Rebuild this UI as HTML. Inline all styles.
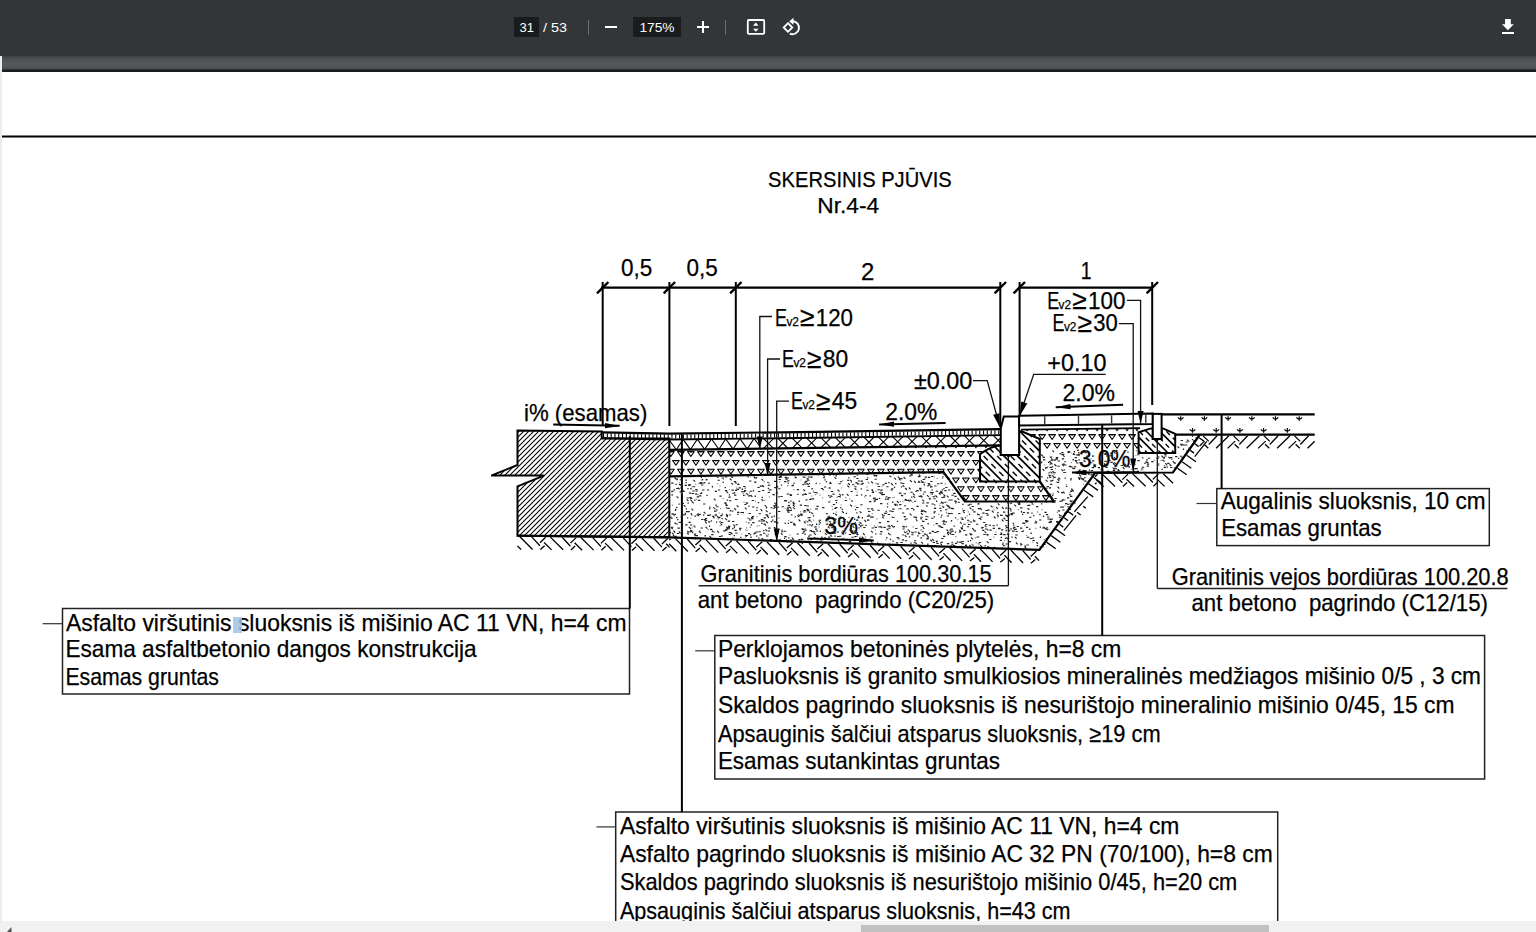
<!DOCTYPE html><html><head><meta charset="utf-8"><style>
html,body{margin:0;padding:0;width:1536px;height:932px;overflow:hidden;background:#f1f1f1;font-family:"Liberation Sans",sans-serif}
#tb{position:absolute;left:0;top:0;width:1536px;height:56px;background:#323639}
#band{position:absolute;left:2px;top:56px;width:1534px;height:16px;background:linear-gradient(#3b3f42 0px,#4a4e51 2.5px,#52565a 6px,#53575a 10px,#4b4f52 12.5px,#2e3032 13.6px,#1b1c1e 14.2px,#1b1c1e 15.6px,#8a8a8a 16px)}
#page{position:absolute;left:2px;top:72px;width:1534px;height:849px;background:#fff}
#sb{position:absolute;left:0;top:921px;width:1536px;height:11px;background:#f1f1f1}
#thumb{position:absolute;left:861px;top:925px;width:408px;height:7px;background:#c1c1c1}
svg{position:absolute;left:0;top:0}
</style></head><body>
<div id="tb"></div><div id="band"></div><div id="page"></div><div id="sb"></div><div id="thumb"></div>

<svg width="1536" height="932" viewBox="0 0 1536 932" font-family="Liberation Sans, sans-serif">
<defs>
<pattern id="h45" patternUnits="userSpaceOnUse" width="5" height="5"><path d="M-1,6 L6,-1 M-1,1 L1,-1 M4,6 L6,4" stroke="#000" stroke-width="1.1"/></pattern>
</defs>
<g font-size="13" fill="#fff">
<rect x="514" y="17" width="25" height="20" fill="#191b1c"/>
<text x="519.5" y="32" textLength="14.5" lengthAdjust="spacingAndGlyphs">31</text>
<text x="543" y="32" textLength="24" lengthAdjust="spacingAndGlyphs">/ 53</text>
<rect x="588" y="20" width="1" height="15" fill="#6b6e71"/>
<rect x="605" y="26" width="12" height="2" fill="#fff"/>
<rect x="633" y="17" width="48" height="20" fill="#191b1c"/>
<text x="639.5" y="32" textLength="35" lengthAdjust="spacingAndGlyphs">175%</text>
<rect x="697" y="26" width="12" height="2" fill="#fff"/><rect x="702" y="21" width="2" height="12" fill="#fff"/>
<rect x="725" y="20" width="1" height="15" fill="#6b6e71"/>
<rect x="747.8" y="20" width="16.4" height="13.8" rx="1" fill="none" stroke="#fff" stroke-width="1.8"/>
<polygon points="755.8,22.6 758.6,25.8 753,25.8" fill="#fff"/><polygon points="755.8,31.8 758.6,28.7 753,28.7" fill="#fff"/>
<polygon points="788,23.2 792.3,27.5 788,31.8 783.7,27.5" fill="none" stroke="#fff" stroke-width="1.8"/>
<path d="M792.5,21.2 A6.5,6.5 0 1 1 789.8,33.6" fill="none" stroke="#fff" stroke-width="1.9"/>
<polygon points="793.5,17.8 793.5,24.8 789.2,21.5" fill="#fff"/>
<polygon points="1505,19 1510.8,19 1510.8,24.3 1513.8,24.3 1507.9,30.2 1502,24.3 1505,24.3" fill="#fff"/>
<rect x="1502" y="32" width="12" height="2" fill="#fff"/>
</g>
<polygon points="11.5,927 11.5,932 7,932" fill="#505050"/>
<rect x="0" y="56" width="2" height="866" fill="#ececec"/>
<rect x="2" y="135.5" width="1534" height="2" fill="#000"/>
<clipPath id="pg"><rect x="2" y="72" width="1534" height="849"/></clipPath>
<g clip-path="url(#pg)">
<g fill="#000" stroke="#000" stroke-width="0.25">
<text x="768.1" y="186.7" font-size="22.4" textLength="183.6" lengthAdjust="spacingAndGlyphs" fill="#000" >SKERSINIS PJŪVIS</text>
<text x="817.3" y="212.7" font-size="22.4" textLength="61.8" lengthAdjust="spacingAndGlyphs" fill="#000" >Nr.4-4</text>
<text x="621.0" y="275.8" font-size="23.4" textLength="31.3" lengthAdjust="spacingAndGlyphs" fill="#000" >0,5</text>
<text x="686.6" y="275.8" font-size="23.4" textLength="31.3" lengthAdjust="spacingAndGlyphs" fill="#000" >0,5</text>
<text x="861.1" y="279.7" font-size="23.4" textLength="13.3" lengthAdjust="spacingAndGlyphs" fill="#000" >2</text>
<text x="1080.7" y="279.3" font-size="23.4" textLength="10.8" lengthAdjust="spacingAndGlyphs" fill="#000" >1</text>
<text x="775.0" y="325.6" font-size="23" textLength="12" lengthAdjust="spacingAndGlyphs">E</text>
<text x="786.4" y="325.6" font-size="13.5" textLength="12.6" lengthAdjust="spacingAndGlyphs">v2</text>
<text x="800.1" y="326.2" font-size="27" textLength="14.5" lengthAdjust="spacingAndGlyphs">≥</text>
<text x="815.8" y="325.6" font-size="23" textLength="37.2" lengthAdjust="spacingAndGlyphs">120</text>
<text x="782.0" y="367.4" font-size="23" textLength="12" lengthAdjust="spacingAndGlyphs">E</text>
<text x="793.4" y="367.4" font-size="13.5" textLength="12.6" lengthAdjust="spacingAndGlyphs">v2</text>
<text x="807.1" y="368.0" font-size="27" textLength="14.5" lengthAdjust="spacingAndGlyphs">≥</text>
<text x="822.8" y="367.4" font-size="23" textLength="25.4" lengthAdjust="spacingAndGlyphs">80</text>
<text x="791.0" y="409.2" font-size="23" textLength="12" lengthAdjust="spacingAndGlyphs">E</text>
<text x="802.4" y="409.2" font-size="13.5" textLength="12.6" lengthAdjust="spacingAndGlyphs">v2</text>
<text x="816.1" y="409.8" font-size="27" textLength="14.5" lengthAdjust="spacingAndGlyphs">≥</text>
<text x="831.8" y="409.2" font-size="23" textLength="25.4" lengthAdjust="spacingAndGlyphs">45</text>
<text x="1047.2" y="308.6" font-size="23" textLength="12" lengthAdjust="spacingAndGlyphs">E</text>
<text x="1058.6" y="308.6" font-size="13.5" textLength="12.6" lengthAdjust="spacingAndGlyphs">v2</text>
<text x="1072.3" y="309.2" font-size="27" textLength="14.5" lengthAdjust="spacingAndGlyphs">≥</text>
<text x="1088.0" y="308.6" font-size="23" textLength="37.4" lengthAdjust="spacingAndGlyphs">100</text>
<text x="1052.5" y="331.4" font-size="23" textLength="12" lengthAdjust="spacingAndGlyphs">E</text>
<text x="1063.9" y="331.4" font-size="13.5" textLength="12.6" lengthAdjust="spacingAndGlyphs">v2</text>
<text x="1077.6" y="332.0" font-size="27" textLength="14.5" lengthAdjust="spacingAndGlyphs">≥</text>
<text x="1093.3" y="331.4" font-size="23" textLength="24.5" lengthAdjust="spacingAndGlyphs">30</text>
<text x="524.0" y="420.5" font-size="23.4" textLength="123.3" lengthAdjust="spacingAndGlyphs" fill="#000" >i% (esamas)</text>
<text x="885.3" y="419.7" font-size="23.4" textLength="52.0" lengthAdjust="spacingAndGlyphs" fill="#000" >2.0%</text>
<text x="913.9" y="389.1" font-size="23.4" textLength="58.5" lengthAdjust="spacingAndGlyphs" fill="#000" >±0.00</text>
<text x="1047.3" y="371.0" font-size="23.4" textLength="59.1" lengthAdjust="spacingAndGlyphs" fill="#000" >+0.10</text>
<text x="1062.5" y="401.3" font-size="23.4" textLength="52.4" lengthAdjust="spacingAndGlyphs" fill="#000" >2.0%</text>
<text x="824.2" y="534.0" font-size="23.4" textLength="33.7" lengthAdjust="spacingAndGlyphs" fill="#000" >3%</text>
<text x="1078.9" y="467.3" font-size="23.4" textLength="51.6" lengthAdjust="spacingAndGlyphs" fill="#000" >3.0%</text>
<text x="700.5" y="581.9" font-size="23.4" textLength="291.1" lengthAdjust="spacingAndGlyphs" fill="#000" >Granitinis bordiūras 100.30.15</text>
<text x="697.7" y="607.6" font-size="23.4" textLength="296.5" lengthAdjust="spacingAndGlyphs" fill="#000" >ant betono&#160; pagrindo (C20/25)</text>
<text x="1171.7" y="584.7" font-size="23.4" textLength="337.0" lengthAdjust="spacingAndGlyphs" fill="#000" >Granitinis vejos bordiūras 100.20.8</text>
<text x="1191.5" y="610.5" font-size="23.4" textLength="296.5" lengthAdjust="spacingAndGlyphs" fill="#000" >ant betono&#160; pagrindo (C12/15)</text>
<text x="1220.7" y="509.2" font-size="23.4" textLength="264.8" lengthAdjust="spacingAndGlyphs" fill="#000" >Augalinis sluoksnis, 10 cm</text>
<text x="1221.2" y="535.7" font-size="23.4" textLength="160.4" lengthAdjust="spacingAndGlyphs" fill="#000" >Esamas gruntas</text>
<text x="66.0" y="630.6" font-size="23.4" textLength="560.5" lengthAdjust="spacingAndGlyphs" fill="#000" >Asfalto viršutinis sluoksnis iš mišinio AC 11 VN, h=4 cm</text>
<text x="65.4" y="657.3" font-size="23.4" textLength="411.3" lengthAdjust="spacingAndGlyphs" fill="#000" >Esama asfaltbetonio dangos konstrukcija</text>
<text x="65.4" y="684.6" font-size="23.4" textLength="153.6" lengthAdjust="spacingAndGlyphs" fill="#000" >Esamas gruntas</text>
<text x="717.9" y="656.8" font-size="23.4" textLength="403.4" lengthAdjust="spacingAndGlyphs" fill="#000" >Perklojamos betoninės plytelės, h=8 cm</text>
<text x="717.9" y="684.2" font-size="23.4" textLength="763.1" lengthAdjust="spacingAndGlyphs" fill="#000" >Pasluoksnis iš granito smulkiosios mineralinės medžiagos mišinio 0/5 , 3 cm</text>
<text x="717.9" y="713.0" font-size="23.4" textLength="736.7" lengthAdjust="spacingAndGlyphs" fill="#000" >Skaldos pagrindo sluoksnis iš nesurištojo mineralinio mišinio 0/45, 15 cm</text>
<text x="717.9" y="741.7" font-size="23.4" textLength="442.8" lengthAdjust="spacingAndGlyphs" fill="#000" >Apsauginis šalčiui atsparus sluoksnis, ≥19 cm</text>
<text x="717.9" y="768.9" font-size="23.4" textLength="282.1" lengthAdjust="spacingAndGlyphs" fill="#000" >Esamas sutankintas gruntas</text>
<text x="619.9" y="834.0" font-size="23.4" textLength="559.5" lengthAdjust="spacingAndGlyphs" fill="#000" >Asfalto viršutinis sluoksnis iš mišinio AC 11 VN, h=4 cm</text>
<text x="619.9" y="862.0" font-size="23.4" textLength="652.9" lengthAdjust="spacingAndGlyphs" fill="#000" >Asfalto pagrindo sluoksnis iš mišinio AC 32 PN (70/100), h=8 cm</text>
<text x="619.9" y="890.4" font-size="23.4" textLength="617.4" lengthAdjust="spacingAndGlyphs" fill="#000" >Skaldos pagrindo sluoksnis iš nesurištojo mišinio 0/45, h=20 cm</text>
<text x="619.9" y="918.7" font-size="23.4" textLength="450.7" lengthAdjust="spacingAndGlyphs" fill="#000" >Apsauginis šalčiui atsparus sluoksnis, h=43 cm</text>
</g>
<rect x="233" y="617" width="9" height="16" fill="#9fc3e3" opacity="0.85"/>
<g fill="none" stroke="#222" stroke-width="1.5">
<rect x="62.5" y="608.5" width="567" height="85.5"/>
<rect x="714.8" y="635.5" width="769.8" height="143.5"/>
<rect x="615.7" y="812" width="662" height="130"/>
<rect x="1216.8" y="488.6" width="272.5" height="57"/>
</g>
<line x1="42.60" y1="623.70" x2="62.50" y2="623.70" stroke="#333" stroke-width="1.2" />
<line x1="695.20" y1="650.80" x2="714.80" y2="650.80" stroke="#333" stroke-width="1.2" />
<line x1="596.40" y1="826.90" x2="615.70" y2="826.90" stroke="#333" stroke-width="1.2" />
<line x1="1196.50" y1="503.50" x2="1216.80" y2="503.50" stroke="#333" stroke-width="1.2" />
<line x1="698.60" y1="585.70" x2="1008.40" y2="585.70" stroke="#222" stroke-width="1.5" />
<line x1="1157.50" y1="588.60" x2="1507.40" y2="588.60" stroke="#222" stroke-width="1.5" />
<line x1="629.80" y1="436.00" x2="629.80" y2="608.50" stroke="#000" stroke-width="2" />
<line x1="681.90" y1="433.00" x2="681.90" y2="812.00" stroke="#000" stroke-width="2" />
<line x1="1102.20" y1="414.50" x2="1102.20" y2="635.50" stroke="#000" stroke-width="2" />
<line x1="1221.60" y1="414.40" x2="1221.60" y2="488.60" stroke="#000" stroke-width="2" />
<line x1="1008.40" y1="455.00" x2="1008.40" y2="585.70" stroke="#111" stroke-width="1.3" />
<line x1="1157.30" y1="439.00" x2="1157.30" y2="588.60" stroke="#111" stroke-width="1.3" />
<circle cx="1008.4" cy="455.5" r="1.8" fill="#000"/>
<circle cx="1157.3" cy="439" r="1.8" fill="#000"/>
<line x1="601.00" y1="287.70" x2="1001.00" y2="287.70" stroke="#000" stroke-width="2.2" />
<line x1="1019.30" y1="287.70" x2="1153.00" y2="287.70" stroke="#000" stroke-width="2.2" />
<line x1="597.00" y1="293.40" x2="608.40" y2="282.00" stroke="#000" stroke-width="2.4" />
<line x1="663.70" y1="293.40" x2="675.10" y2="282.00" stroke="#000" stroke-width="2.4" />
<line x1="730.10" y1="293.40" x2="741.50" y2="282.00" stroke="#000" stroke-width="2.4" />
<line x1="994.60" y1="293.40" x2="1006.00" y2="282.00" stroke="#000" stroke-width="2.4" />
<line x1="1013.60" y1="293.40" x2="1025.00" y2="282.00" stroke="#000" stroke-width="2.4" />
<line x1="1146.60" y1="293.40" x2="1158.00" y2="282.00" stroke="#000" stroke-width="2.4" />
<line x1="602.70" y1="282.00" x2="602.70" y2="426.00" stroke="#000" stroke-width="2" />
<line x1="669.40" y1="282.00" x2="669.40" y2="426.00" stroke="#000" stroke-width="2" />
<line x1="735.80" y1="282.00" x2="735.80" y2="426.00" stroke="#000" stroke-width="2" />
<line x1="1000.30" y1="282.00" x2="1000.30" y2="427.00" stroke="#000" stroke-width="2" />
<line x1="1019.60" y1="282.00" x2="1019.60" y2="415.00" stroke="#000" stroke-width="2" />
<line x1="1152.20" y1="282.00" x2="1152.20" y2="405.00" stroke="#000" stroke-width="2" />
<polygon points="517.50,430.60 601.70,431.60 601.70,438.30 669.30,438.40 669.30,537.30 517.50,535.70 517.50,486.40 543.90,475.60 491.25,475.60 517.50,465.00" fill="url(#h45)" stroke="#000" stroke-width="2" stroke-linejoin="miter"/>
<g>
<polyline points="601.70,432.30 669.30,433.60 800.00,432.10 1000.80,429.20" fill="none" stroke="#000" stroke-width="2.2" />
<polyline points="601.70,438.20 669.30,439.50 800.00,438.00 1000.80,435.10" fill="none" stroke="#000" stroke-width="1.9" />
<rect x="603.00" y="433.32" width="1.1" height="4" fill="#000"/>
<rect x="606.80" y="433.40" width="1.1" height="4" fill="#000"/>
<rect x="610.60" y="433.47" width="1.1" height="4" fill="#000"/>
<rect x="614.40" y="433.54" width="1.1" height="4" fill="#000"/>
<rect x="618.20" y="433.62" width="1.1" height="4" fill="#000"/>
<rect x="622.00" y="433.69" width="1.1" height="4" fill="#000"/>
<rect x="625.80" y="433.76" width="1.1" height="4" fill="#000"/>
<rect x="629.60" y="433.84" width="1.1" height="4" fill="#000"/>
<rect x="633.40" y="433.91" width="1.1" height="4" fill="#000"/>
<rect x="637.20" y="433.98" width="1.1" height="4" fill="#000"/>
<rect x="641.00" y="434.06" width="1.1" height="4" fill="#000"/>
<rect x="644.80" y="434.13" width="1.1" height="4" fill="#000"/>
<rect x="648.60" y="434.20" width="1.1" height="4" fill="#000"/>
<rect x="652.40" y="434.28" width="1.1" height="4" fill="#000"/>
<rect x="656.20" y="434.35" width="1.1" height="4" fill="#000"/>
<rect x="660.00" y="434.42" width="1.1" height="4" fill="#000"/>
<rect x="663.80" y="434.49" width="1.1" height="4" fill="#000"/>
<rect x="667.60" y="434.57" width="1.1" height="4" fill="#000"/>
<rect x="671.40" y="434.58" width="1.1" height="4" fill="#000"/>
<rect x="675.20" y="434.53" width="1.1" height="4" fill="#000"/>
<rect x="679.00" y="434.49" width="1.1" height="4" fill="#000"/>
<rect x="682.80" y="434.45" width="1.1" height="4" fill="#000"/>
<rect x="686.60" y="434.40" width="1.1" height="4" fill="#000"/>
<rect x="690.40" y="434.36" width="1.1" height="4" fill="#000"/>
<rect x="694.20" y="434.31" width="1.1" height="4" fill="#000"/>
<rect x="698.00" y="434.27" width="1.1" height="4" fill="#000"/>
<rect x="701.80" y="434.23" width="1.1" height="4" fill="#000"/>
<rect x="705.60" y="434.18" width="1.1" height="4" fill="#000"/>
<rect x="709.40" y="434.14" width="1.1" height="4" fill="#000"/>
<rect x="713.20" y="434.10" width="1.1" height="4" fill="#000"/>
<rect x="717.00" y="434.05" width="1.1" height="4" fill="#000"/>
<rect x="720.80" y="434.01" width="1.1" height="4" fill="#000"/>
<rect x="724.60" y="433.97" width="1.1" height="4" fill="#000"/>
<rect x="728.40" y="433.92" width="1.1" height="4" fill="#000"/>
<rect x="732.20" y="433.88" width="1.1" height="4" fill="#000"/>
<rect x="736.00" y="433.83" width="1.1" height="4" fill="#000"/>
<rect x="739.80" y="433.79" width="1.1" height="4" fill="#000"/>
<rect x="743.60" y="433.75" width="1.1" height="4" fill="#000"/>
<rect x="747.40" y="433.70" width="1.1" height="4" fill="#000"/>
<rect x="751.20" y="433.66" width="1.1" height="4" fill="#000"/>
<rect x="755.00" y="433.62" width="1.1" height="4" fill="#000"/>
<rect x="758.80" y="433.57" width="1.1" height="4" fill="#000"/>
<rect x="762.60" y="433.53" width="1.1" height="4" fill="#000"/>
<rect x="766.40" y="433.49" width="1.1" height="4" fill="#000"/>
<rect x="770.20" y="433.44" width="1.1" height="4" fill="#000"/>
<rect x="774.00" y="433.40" width="1.1" height="4" fill="#000"/>
<rect x="777.80" y="433.35" width="1.1" height="4" fill="#000"/>
<rect x="781.60" y="433.31" width="1.1" height="4" fill="#000"/>
<rect x="785.40" y="433.27" width="1.1" height="4" fill="#000"/>
<rect x="789.20" y="433.22" width="1.1" height="4" fill="#000"/>
<rect x="793.00" y="433.18" width="1.1" height="4" fill="#000"/>
<rect x="796.80" y="433.14" width="1.1" height="4" fill="#000"/>
<rect x="800.60" y="433.09" width="1.1" height="4" fill="#000"/>
<rect x="804.40" y="433.04" width="1.1" height="4" fill="#000"/>
<rect x="808.20" y="432.98" width="1.1" height="4" fill="#000"/>
<rect x="812.00" y="432.93" width="1.1" height="4" fill="#000"/>
<rect x="815.80" y="432.87" width="1.1" height="4" fill="#000"/>
<rect x="819.60" y="432.82" width="1.1" height="4" fill="#000"/>
<rect x="823.40" y="432.76" width="1.1" height="4" fill="#000"/>
<rect x="827.20" y="432.71" width="1.1" height="4" fill="#000"/>
<rect x="831.00" y="432.65" width="1.1" height="4" fill="#000"/>
<rect x="834.80" y="432.60" width="1.1" height="4" fill="#000"/>
<rect x="838.60" y="432.54" width="1.1" height="4" fill="#000"/>
<rect x="842.40" y="432.49" width="1.1" height="4" fill="#000"/>
<rect x="846.20" y="432.43" width="1.1" height="4" fill="#000"/>
<rect x="850.00" y="432.38" width="1.1" height="4" fill="#000"/>
<rect x="853.80" y="432.32" width="1.1" height="4" fill="#000"/>
<rect x="857.60" y="432.27" width="1.1" height="4" fill="#000"/>
<rect x="861.40" y="432.21" width="1.1" height="4" fill="#000"/>
<rect x="865.20" y="432.16" width="1.1" height="4" fill="#000"/>
<rect x="869.00" y="432.10" width="1.1" height="4" fill="#000"/>
<rect x="872.80" y="432.05" width="1.1" height="4" fill="#000"/>
<rect x="876.60" y="431.99" width="1.1" height="4" fill="#000"/>
<rect x="880.40" y="431.94" width="1.1" height="4" fill="#000"/>
<rect x="884.20" y="431.88" width="1.1" height="4" fill="#000"/>
<rect x="888.00" y="431.83" width="1.1" height="4" fill="#000"/>
<rect x="891.80" y="431.77" width="1.1" height="4" fill="#000"/>
<rect x="895.60" y="431.72" width="1.1" height="4" fill="#000"/>
<rect x="899.40" y="431.66" width="1.1" height="4" fill="#000"/>
<rect x="903.20" y="431.61" width="1.1" height="4" fill="#000"/>
<rect x="907.00" y="431.55" width="1.1" height="4" fill="#000"/>
<rect x="910.80" y="431.50" width="1.1" height="4" fill="#000"/>
<rect x="914.60" y="431.44" width="1.1" height="4" fill="#000"/>
<rect x="918.40" y="431.39" width="1.1" height="4" fill="#000"/>
<rect x="922.20" y="431.34" width="1.1" height="4" fill="#000"/>
<rect x="926.00" y="431.28" width="1.1" height="4" fill="#000"/>
<rect x="929.80" y="431.23" width="1.1" height="4" fill="#000"/>
<rect x="933.60" y="431.17" width="1.1" height="4" fill="#000"/>
<rect x="937.40" y="431.12" width="1.1" height="4" fill="#000"/>
<rect x="941.20" y="431.06" width="1.1" height="4" fill="#000"/>
<rect x="945.00" y="431.01" width="1.1" height="4" fill="#000"/>
<rect x="948.80" y="430.95" width="1.1" height="4" fill="#000"/>
<rect x="952.60" y="430.90" width="1.1" height="4" fill="#000"/>
<rect x="956.40" y="430.84" width="1.1" height="4" fill="#000"/>
<rect x="960.20" y="430.79" width="1.1" height="4" fill="#000"/>
<rect x="964.00" y="430.73" width="1.1" height="4" fill="#000"/>
<rect x="967.80" y="430.68" width="1.1" height="4" fill="#000"/>
<rect x="971.60" y="430.62" width="1.1" height="4" fill="#000"/>
<rect x="975.40" y="430.57" width="1.1" height="4" fill="#000"/>
<rect x="979.20" y="430.51" width="1.1" height="4" fill="#000"/>
<rect x="983.00" y="430.46" width="1.1" height="4" fill="#000"/>
<rect x="986.80" y="430.40" width="1.1" height="4" fill="#000"/>
<rect x="990.60" y="430.35" width="1.1" height="4" fill="#000"/>
<rect x="994.40" y="430.29" width="1.1" height="4" fill="#000"/>
<rect x="998.20" y="430.24" width="1.1" height="4" fill="#000"/>
</g>
<clipPath id="cx"><polygon points="759.8,438.5 1000.8,435.1 1000.8,445.4 759.8,448.8"/></clipPath>
<g clip-path="url(#cx)" stroke="#000" stroke-width="1.1">
<line x1="749.05" y1="438.53" x2="759.35" y2="448.83"/>
<line x1="749.05" y1="448.83" x2="759.35" y2="438.53"/>
<line x1="763.40" y1="438.36" x2="773.70" y2="448.66"/>
<line x1="763.40" y1="448.66" x2="773.70" y2="438.36"/>
<line x1="777.75" y1="438.20" x2="788.05" y2="448.50"/>
<line x1="777.75" y1="448.50" x2="788.05" y2="438.20"/>
<line x1="792.10" y1="438.03" x2="802.40" y2="448.33"/>
<line x1="792.10" y1="448.33" x2="802.40" y2="438.03"/>
<line x1="806.45" y1="437.83" x2="816.75" y2="448.13"/>
<line x1="806.45" y1="448.13" x2="816.75" y2="437.83"/>
<line x1="820.80" y1="437.63" x2="831.10" y2="447.93"/>
<line x1="820.80" y1="447.93" x2="831.10" y2="437.63"/>
<line x1="835.15" y1="437.42" x2="845.45" y2="447.72"/>
<line x1="835.15" y1="447.72" x2="845.45" y2="437.42"/>
<line x1="849.50" y1="437.21" x2="859.80" y2="447.51"/>
<line x1="849.50" y1="447.51" x2="859.80" y2="437.21"/>
<line x1="863.85" y1="437.00" x2="874.15" y2="447.30"/>
<line x1="863.85" y1="447.30" x2="874.15" y2="437.00"/>
<line x1="878.20" y1="436.80" x2="888.50" y2="447.10"/>
<line x1="878.20" y1="447.10" x2="888.50" y2="436.80"/>
<line x1="892.55" y1="436.59" x2="902.85" y2="446.89"/>
<line x1="892.55" y1="446.89" x2="902.85" y2="436.59"/>
<line x1="906.90" y1="436.38" x2="917.20" y2="446.68"/>
<line x1="906.90" y1="446.68" x2="917.20" y2="436.38"/>
<line x1="921.25" y1="436.17" x2="931.55" y2="446.47"/>
<line x1="921.25" y1="446.47" x2="931.55" y2="436.17"/>
<line x1="935.60" y1="435.97" x2="945.90" y2="446.27"/>
<line x1="935.60" y1="446.27" x2="945.90" y2="435.97"/>
<line x1="949.95" y1="435.76" x2="960.25" y2="446.06"/>
<line x1="949.95" y1="446.06" x2="960.25" y2="435.76"/>
<line x1="964.30" y1="435.55" x2="974.60" y2="445.85"/>
<line x1="964.30" y1="445.85" x2="974.60" y2="435.55"/>
<line x1="978.65" y1="435.35" x2="988.95" y2="445.65"/>
<line x1="978.65" y1="445.65" x2="988.95" y2="435.35"/>
<line x1="993.00" y1="435.14" x2="1003.30" y2="445.44"/>
<line x1="993.00" y1="445.44" x2="1003.30" y2="435.14"/>
</g>
<clipPath id="cx2"><rect x="669.3" y="420" width="90.5" height="40"/></clipPath>
<g clip-path="url(#cx2)" stroke="#000" stroke-width="1.1" fill="none">
<path d="M662.10,449.66L668.90,439.49L676.30,449.72M676.30,449.72L683.10,439.34L690.50,449.56M690.50,449.56L697.30,439.18L704.70,449.39M704.70,449.39L711.50,439.02L718.90,449.23M718.90,449.23L725.70,438.85L733.10,449.07M733.10,449.07L739.90,438.69L747.30,448.90M747.30,448.90L754.10,438.53L761.50,448.74M761.50,448.74L768.30,438.36L775.70,448.58"/>
</g>
<polyline points="669.30,449.80 1000.80,445.40" fill="none" stroke="#000" stroke-width="2.2" />
<defs><g id="tri"><path d="M-3.3,-2.3 L3.3,-2.3 L0,2.6 Z" fill="none" stroke="#000" stroke-width="1.05" stroke-linejoin="round"/><path d="M0,-2.3 L0,-0.9" stroke="#222" stroke-width="0.9"/></g></defs>
<clipPath id="ctr"><polygon points="669.3,449.8 1000.8,445.4 1000.8,445.2 980.0,454.3 980.0,481.5 1039.8,481.5 1053.9,501.5 964.8,501.5 943.5,472.2 669.3,476.3"/></clipPath>
<clipPath id="cts"><polygon points="1021.5,429.6 1138.6,428.2 1138.6,449.6 1039.6,449.6 1039.8,439.0 1021.5,431.3"/></clipPath>
<g clip-path="url(#ctr)">
<use href="#tri" x="655.9" y="427.5"/>
<use href="#tri" x="665.9" y="427.5"/>
<use href="#tri" x="675.9" y="427.5"/>
<use href="#tri" x="685.9" y="427.5"/>
<use href="#tri" x="695.9" y="427.5"/>
<use href="#tri" x="705.9" y="427.5"/>
<use href="#tri" x="715.9" y="427.5"/>
<use href="#tri" x="725.9" y="427.5"/>
<use href="#tri" x="735.9" y="427.5"/>
<use href="#tri" x="745.9" y="427.5"/>
<use href="#tri" x="755.9" y="427.5"/>
<use href="#tri" x="765.9" y="427.5"/>
<use href="#tri" x="775.9" y="427.5"/>
<use href="#tri" x="785.9" y="427.5"/>
<use href="#tri" x="795.9" y="427.5"/>
<use href="#tri" x="805.9" y="427.5"/>
<use href="#tri" x="815.9" y="427.5"/>
<use href="#tri" x="825.9" y="427.5"/>
<use href="#tri" x="835.9" y="427.5"/>
<use href="#tri" x="845.9" y="427.5"/>
<use href="#tri" x="855.9" y="427.5"/>
<use href="#tri" x="865.9" y="427.5"/>
<use href="#tri" x="875.9" y="427.5"/>
<use href="#tri" x="885.9" y="427.5"/>
<use href="#tri" x="895.9" y="427.5"/>
<use href="#tri" x="905.9" y="427.5"/>
<use href="#tri" x="915.9" y="427.5"/>
<use href="#tri" x="925.9" y="427.5"/>
<use href="#tri" x="935.9" y="427.5"/>
<use href="#tri" x="945.9" y="427.5"/>
<use href="#tri" x="955.9" y="427.5"/>
<use href="#tri" x="965.9" y="427.5"/>
<use href="#tri" x="975.9" y="427.5"/>
<use href="#tri" x="985.9" y="427.5"/>
<use href="#tri" x="995.9" y="427.5"/>
<use href="#tri" x="1005.9" y="427.5"/>
<use href="#tri" x="1015.9" y="427.5"/>
<use href="#tri" x="1025.9" y="427.5"/>
<use href="#tri" x="1035.9" y="427.5"/>
<use href="#tri" x="1045.9" y="427.5"/>
<use href="#tri" x="1055.9" y="427.5"/>
<use href="#tri" x="1065.9" y="427.5"/>
<use href="#tri" x="650.9" y="436.3"/>
<use href="#tri" x="660.9" y="436.3"/>
<use href="#tri" x="670.9" y="436.3"/>
<use href="#tri" x="680.9" y="436.3"/>
<use href="#tri" x="690.9" y="436.3"/>
<use href="#tri" x="700.9" y="436.3"/>
<use href="#tri" x="710.9" y="436.3"/>
<use href="#tri" x="720.9" y="436.3"/>
<use href="#tri" x="730.9" y="436.3"/>
<use href="#tri" x="740.9" y="436.3"/>
<use href="#tri" x="750.9" y="436.3"/>
<use href="#tri" x="760.9" y="436.3"/>
<use href="#tri" x="770.9" y="436.3"/>
<use href="#tri" x="780.9" y="436.3"/>
<use href="#tri" x="790.9" y="436.3"/>
<use href="#tri" x="800.9" y="436.3"/>
<use href="#tri" x="810.9" y="436.3"/>
<use href="#tri" x="820.9" y="436.3"/>
<use href="#tri" x="830.9" y="436.3"/>
<use href="#tri" x="840.9" y="436.3"/>
<use href="#tri" x="850.9" y="436.3"/>
<use href="#tri" x="860.9" y="436.3"/>
<use href="#tri" x="870.9" y="436.3"/>
<use href="#tri" x="880.9" y="436.3"/>
<use href="#tri" x="890.9" y="436.3"/>
<use href="#tri" x="900.9" y="436.3"/>
<use href="#tri" x="910.9" y="436.3"/>
<use href="#tri" x="920.9" y="436.3"/>
<use href="#tri" x="930.9" y="436.3"/>
<use href="#tri" x="940.9" y="436.3"/>
<use href="#tri" x="950.9" y="436.3"/>
<use href="#tri" x="960.9" y="436.3"/>
<use href="#tri" x="970.9" y="436.3"/>
<use href="#tri" x="980.9" y="436.3"/>
<use href="#tri" x="990.9" y="436.3"/>
<use href="#tri" x="1000.9" y="436.3"/>
<use href="#tri" x="1010.9" y="436.3"/>
<use href="#tri" x="1020.9" y="436.3"/>
<use href="#tri" x="1030.9" y="436.3"/>
<use href="#tri" x="1040.9" y="436.3"/>
<use href="#tri" x="1050.9" y="436.3"/>
<use href="#tri" x="1060.9" y="436.3"/>
<use href="#tri" x="655.9" y="445.1"/>
<use href="#tri" x="665.9" y="445.1"/>
<use href="#tri" x="675.9" y="445.1"/>
<use href="#tri" x="685.9" y="445.1"/>
<use href="#tri" x="695.9" y="445.1"/>
<use href="#tri" x="705.9" y="445.1"/>
<use href="#tri" x="715.9" y="445.1"/>
<use href="#tri" x="725.9" y="445.1"/>
<use href="#tri" x="735.9" y="445.1"/>
<use href="#tri" x="745.9" y="445.1"/>
<use href="#tri" x="755.9" y="445.1"/>
<use href="#tri" x="765.9" y="445.1"/>
<use href="#tri" x="775.9" y="445.1"/>
<use href="#tri" x="785.9" y="445.1"/>
<use href="#tri" x="795.9" y="445.1"/>
<use href="#tri" x="805.9" y="445.1"/>
<use href="#tri" x="815.9" y="445.1"/>
<use href="#tri" x="825.9" y="445.1"/>
<use href="#tri" x="835.9" y="445.1"/>
<use href="#tri" x="845.9" y="445.1"/>
<use href="#tri" x="855.9" y="445.1"/>
<use href="#tri" x="865.9" y="445.1"/>
<use href="#tri" x="875.9" y="445.1"/>
<use href="#tri" x="885.9" y="445.1"/>
<use href="#tri" x="895.9" y="445.1"/>
<use href="#tri" x="905.9" y="445.1"/>
<use href="#tri" x="915.9" y="445.1"/>
<use href="#tri" x="925.9" y="445.1"/>
<use href="#tri" x="935.9" y="445.1"/>
<use href="#tri" x="945.9" y="445.1"/>
<use href="#tri" x="955.9" y="445.1"/>
<use href="#tri" x="965.9" y="445.1"/>
<use href="#tri" x="975.9" y="445.1"/>
<use href="#tri" x="985.9" y="445.1"/>
<use href="#tri" x="995.9" y="445.1"/>
<use href="#tri" x="1005.9" y="445.1"/>
<use href="#tri" x="1015.9" y="445.1"/>
<use href="#tri" x="1025.9" y="445.1"/>
<use href="#tri" x="1035.9" y="445.1"/>
<use href="#tri" x="1045.9" y="445.1"/>
<use href="#tri" x="1055.9" y="445.1"/>
<use href="#tri" x="1065.9" y="445.1"/>
<use href="#tri" x="650.9" y="453.9"/>
<use href="#tri" x="660.9" y="453.9"/>
<use href="#tri" x="670.9" y="453.9"/>
<use href="#tri" x="680.9" y="453.9"/>
<use href="#tri" x="690.9" y="453.9"/>
<use href="#tri" x="700.9" y="453.9"/>
<use href="#tri" x="710.9" y="453.9"/>
<use href="#tri" x="720.9" y="453.9"/>
<use href="#tri" x="730.9" y="453.9"/>
<use href="#tri" x="740.9" y="453.9"/>
<use href="#tri" x="750.9" y="453.9"/>
<use href="#tri" x="760.9" y="453.9"/>
<use href="#tri" x="770.9" y="453.9"/>
<use href="#tri" x="780.9" y="453.9"/>
<use href="#tri" x="790.9" y="453.9"/>
<use href="#tri" x="800.9" y="453.9"/>
<use href="#tri" x="810.9" y="453.9"/>
<use href="#tri" x="820.9" y="453.9"/>
<use href="#tri" x="830.9" y="453.9"/>
<use href="#tri" x="840.9" y="453.9"/>
<use href="#tri" x="850.9" y="453.9"/>
<use href="#tri" x="860.9" y="453.9"/>
<use href="#tri" x="870.9" y="453.9"/>
<use href="#tri" x="880.9" y="453.9"/>
<use href="#tri" x="890.9" y="453.9"/>
<use href="#tri" x="900.9" y="453.9"/>
<use href="#tri" x="910.9" y="453.9"/>
<use href="#tri" x="920.9" y="453.9"/>
<use href="#tri" x="930.9" y="453.9"/>
<use href="#tri" x="940.9" y="453.9"/>
<use href="#tri" x="950.9" y="453.9"/>
<use href="#tri" x="960.9" y="453.9"/>
<use href="#tri" x="970.9" y="453.9"/>
<use href="#tri" x="980.9" y="453.9"/>
<use href="#tri" x="990.9" y="453.9"/>
<use href="#tri" x="1000.9" y="453.9"/>
<use href="#tri" x="1010.9" y="453.9"/>
<use href="#tri" x="1020.9" y="453.9"/>
<use href="#tri" x="1030.9" y="453.9"/>
<use href="#tri" x="1040.9" y="453.9"/>
<use href="#tri" x="1050.9" y="453.9"/>
<use href="#tri" x="1060.9" y="453.9"/>
<use href="#tri" x="655.9" y="462.7"/>
<use href="#tri" x="665.9" y="462.7"/>
<use href="#tri" x="675.9" y="462.7"/>
<use href="#tri" x="685.9" y="462.7"/>
<use href="#tri" x="695.9" y="462.7"/>
<use href="#tri" x="705.9" y="462.7"/>
<use href="#tri" x="715.9" y="462.7"/>
<use href="#tri" x="725.9" y="462.7"/>
<use href="#tri" x="735.9" y="462.7"/>
<use href="#tri" x="745.9" y="462.7"/>
<use href="#tri" x="755.9" y="462.7"/>
<use href="#tri" x="765.9" y="462.7"/>
<use href="#tri" x="775.9" y="462.7"/>
<use href="#tri" x="785.9" y="462.7"/>
<use href="#tri" x="795.9" y="462.7"/>
<use href="#tri" x="805.9" y="462.7"/>
<use href="#tri" x="815.9" y="462.7"/>
<use href="#tri" x="825.9" y="462.7"/>
<use href="#tri" x="835.9" y="462.7"/>
<use href="#tri" x="845.9" y="462.7"/>
<use href="#tri" x="855.9" y="462.7"/>
<use href="#tri" x="865.9" y="462.7"/>
<use href="#tri" x="875.9" y="462.7"/>
<use href="#tri" x="885.9" y="462.7"/>
<use href="#tri" x="895.9" y="462.7"/>
<use href="#tri" x="905.9" y="462.7"/>
<use href="#tri" x="915.9" y="462.7"/>
<use href="#tri" x="925.9" y="462.7"/>
<use href="#tri" x="935.9" y="462.7"/>
<use href="#tri" x="945.9" y="462.7"/>
<use href="#tri" x="955.9" y="462.7"/>
<use href="#tri" x="965.9" y="462.7"/>
<use href="#tri" x="975.9" y="462.7"/>
<use href="#tri" x="985.9" y="462.7"/>
<use href="#tri" x="995.9" y="462.7"/>
<use href="#tri" x="1005.9" y="462.7"/>
<use href="#tri" x="1015.9" y="462.7"/>
<use href="#tri" x="1025.9" y="462.7"/>
<use href="#tri" x="1035.9" y="462.7"/>
<use href="#tri" x="1045.9" y="462.7"/>
<use href="#tri" x="1055.9" y="462.7"/>
<use href="#tri" x="1065.9" y="462.7"/>
<use href="#tri" x="650.9" y="471.5"/>
<use href="#tri" x="660.9" y="471.5"/>
<use href="#tri" x="670.9" y="471.5"/>
<use href="#tri" x="680.9" y="471.5"/>
<use href="#tri" x="690.9" y="471.5"/>
<use href="#tri" x="700.9" y="471.5"/>
<use href="#tri" x="710.9" y="471.5"/>
<use href="#tri" x="720.9" y="471.5"/>
<use href="#tri" x="730.9" y="471.5"/>
<use href="#tri" x="740.9" y="471.5"/>
<use href="#tri" x="750.9" y="471.5"/>
<use href="#tri" x="760.9" y="471.5"/>
<use href="#tri" x="770.9" y="471.5"/>
<use href="#tri" x="780.9" y="471.5"/>
<use href="#tri" x="790.9" y="471.5"/>
<use href="#tri" x="800.9" y="471.5"/>
<use href="#tri" x="810.9" y="471.5"/>
<use href="#tri" x="820.9" y="471.5"/>
<use href="#tri" x="830.9" y="471.5"/>
<use href="#tri" x="840.9" y="471.5"/>
<use href="#tri" x="850.9" y="471.5"/>
<use href="#tri" x="860.9" y="471.5"/>
<use href="#tri" x="870.9" y="471.5"/>
<use href="#tri" x="880.9" y="471.5"/>
<use href="#tri" x="890.9" y="471.5"/>
<use href="#tri" x="900.9" y="471.5"/>
<use href="#tri" x="910.9" y="471.5"/>
<use href="#tri" x="920.9" y="471.5"/>
<use href="#tri" x="930.9" y="471.5"/>
<use href="#tri" x="940.9" y="471.5"/>
<use href="#tri" x="950.9" y="471.5"/>
<use href="#tri" x="960.9" y="471.5"/>
<use href="#tri" x="970.9" y="471.5"/>
<use href="#tri" x="980.9" y="471.5"/>
<use href="#tri" x="990.9" y="471.5"/>
<use href="#tri" x="1000.9" y="471.5"/>
<use href="#tri" x="1010.9" y="471.5"/>
<use href="#tri" x="1020.9" y="471.5"/>
<use href="#tri" x="1030.9" y="471.5"/>
<use href="#tri" x="1040.9" y="471.5"/>
<use href="#tri" x="1050.9" y="471.5"/>
<use href="#tri" x="1060.9" y="471.5"/>
<use href="#tri" x="655.9" y="480.3"/>
<use href="#tri" x="665.9" y="480.3"/>
<use href="#tri" x="675.9" y="480.3"/>
<use href="#tri" x="685.9" y="480.3"/>
<use href="#tri" x="695.9" y="480.3"/>
<use href="#tri" x="705.9" y="480.3"/>
<use href="#tri" x="715.9" y="480.3"/>
<use href="#tri" x="725.9" y="480.3"/>
<use href="#tri" x="735.9" y="480.3"/>
<use href="#tri" x="745.9" y="480.3"/>
<use href="#tri" x="755.9" y="480.3"/>
<use href="#tri" x="765.9" y="480.3"/>
<use href="#tri" x="775.9" y="480.3"/>
<use href="#tri" x="785.9" y="480.3"/>
<use href="#tri" x="795.9" y="480.3"/>
<use href="#tri" x="805.9" y="480.3"/>
<use href="#tri" x="815.9" y="480.3"/>
<use href="#tri" x="825.9" y="480.3"/>
<use href="#tri" x="835.9" y="480.3"/>
<use href="#tri" x="845.9" y="480.3"/>
<use href="#tri" x="855.9" y="480.3"/>
<use href="#tri" x="865.9" y="480.3"/>
<use href="#tri" x="875.9" y="480.3"/>
<use href="#tri" x="885.9" y="480.3"/>
<use href="#tri" x="895.9" y="480.3"/>
<use href="#tri" x="905.9" y="480.3"/>
<use href="#tri" x="915.9" y="480.3"/>
<use href="#tri" x="925.9" y="480.3"/>
<use href="#tri" x="935.9" y="480.3"/>
<use href="#tri" x="945.9" y="480.3"/>
<use href="#tri" x="955.9" y="480.3"/>
<use href="#tri" x="965.9" y="480.3"/>
<use href="#tri" x="975.9" y="480.3"/>
<use href="#tri" x="985.9" y="480.3"/>
<use href="#tri" x="995.9" y="480.3"/>
<use href="#tri" x="1005.9" y="480.3"/>
<use href="#tri" x="1015.9" y="480.3"/>
<use href="#tri" x="1025.9" y="480.3"/>
<use href="#tri" x="1035.9" y="480.3"/>
<use href="#tri" x="1045.9" y="480.3"/>
<use href="#tri" x="1055.9" y="480.3"/>
<use href="#tri" x="1065.9" y="480.3"/>
<use href="#tri" x="650.9" y="489.1"/>
<use href="#tri" x="660.9" y="489.1"/>
<use href="#tri" x="670.9" y="489.1"/>
<use href="#tri" x="680.9" y="489.1"/>
<use href="#tri" x="690.9" y="489.1"/>
<use href="#tri" x="700.9" y="489.1"/>
<use href="#tri" x="710.9" y="489.1"/>
<use href="#tri" x="720.9" y="489.1"/>
<use href="#tri" x="730.9" y="489.1"/>
<use href="#tri" x="740.9" y="489.1"/>
<use href="#tri" x="750.9" y="489.1"/>
<use href="#tri" x="760.9" y="489.1"/>
<use href="#tri" x="770.9" y="489.1"/>
<use href="#tri" x="780.9" y="489.1"/>
<use href="#tri" x="790.9" y="489.1"/>
<use href="#tri" x="800.9" y="489.1"/>
<use href="#tri" x="810.9" y="489.1"/>
<use href="#tri" x="820.9" y="489.1"/>
<use href="#tri" x="830.9" y="489.1"/>
<use href="#tri" x="840.9" y="489.1"/>
<use href="#tri" x="850.9" y="489.1"/>
<use href="#tri" x="860.9" y="489.1"/>
<use href="#tri" x="870.9" y="489.1"/>
<use href="#tri" x="880.9" y="489.1"/>
<use href="#tri" x="890.9" y="489.1"/>
<use href="#tri" x="900.9" y="489.1"/>
<use href="#tri" x="910.9" y="489.1"/>
<use href="#tri" x="920.9" y="489.1"/>
<use href="#tri" x="930.9" y="489.1"/>
<use href="#tri" x="940.9" y="489.1"/>
<use href="#tri" x="950.9" y="489.1"/>
<use href="#tri" x="960.9" y="489.1"/>
<use href="#tri" x="970.9" y="489.1"/>
<use href="#tri" x="980.9" y="489.1"/>
<use href="#tri" x="990.9" y="489.1"/>
<use href="#tri" x="1000.9" y="489.1"/>
<use href="#tri" x="1010.9" y="489.1"/>
<use href="#tri" x="1020.9" y="489.1"/>
<use href="#tri" x="1030.9" y="489.1"/>
<use href="#tri" x="1040.9" y="489.1"/>
<use href="#tri" x="1050.9" y="489.1"/>
<use href="#tri" x="1060.9" y="489.1"/>
<use href="#tri" x="655.9" y="497.9"/>
<use href="#tri" x="665.9" y="497.9"/>
<use href="#tri" x="675.9" y="497.9"/>
<use href="#tri" x="685.9" y="497.9"/>
<use href="#tri" x="695.9" y="497.9"/>
<use href="#tri" x="705.9" y="497.9"/>
<use href="#tri" x="715.9" y="497.9"/>
<use href="#tri" x="725.9" y="497.9"/>
<use href="#tri" x="735.9" y="497.9"/>
<use href="#tri" x="745.9" y="497.9"/>
<use href="#tri" x="755.9" y="497.9"/>
<use href="#tri" x="765.9" y="497.9"/>
<use href="#tri" x="775.9" y="497.9"/>
<use href="#tri" x="785.9" y="497.9"/>
<use href="#tri" x="795.9" y="497.9"/>
<use href="#tri" x="805.9" y="497.9"/>
<use href="#tri" x="815.9" y="497.9"/>
<use href="#tri" x="825.9" y="497.9"/>
<use href="#tri" x="835.9" y="497.9"/>
<use href="#tri" x="845.9" y="497.9"/>
<use href="#tri" x="855.9" y="497.9"/>
<use href="#tri" x="865.9" y="497.9"/>
<use href="#tri" x="875.9" y="497.9"/>
<use href="#tri" x="885.9" y="497.9"/>
<use href="#tri" x="895.9" y="497.9"/>
<use href="#tri" x="905.9" y="497.9"/>
<use href="#tri" x="915.9" y="497.9"/>
<use href="#tri" x="925.9" y="497.9"/>
<use href="#tri" x="935.9" y="497.9"/>
<use href="#tri" x="945.9" y="497.9"/>
<use href="#tri" x="955.9" y="497.9"/>
<use href="#tri" x="965.9" y="497.9"/>
<use href="#tri" x="975.9" y="497.9"/>
<use href="#tri" x="985.9" y="497.9"/>
<use href="#tri" x="995.9" y="497.9"/>
<use href="#tri" x="1005.9" y="497.9"/>
<use href="#tri" x="1015.9" y="497.9"/>
<use href="#tri" x="1025.9" y="497.9"/>
<use href="#tri" x="1035.9" y="497.9"/>
<use href="#tri" x="1045.9" y="497.9"/>
<use href="#tri" x="1055.9" y="497.9"/>
<use href="#tri" x="1065.9" y="497.9"/>
<use href="#tri" x="650.9" y="506.7"/>
<use href="#tri" x="660.9" y="506.7"/>
<use href="#tri" x="670.9" y="506.7"/>
<use href="#tri" x="680.9" y="506.7"/>
<use href="#tri" x="690.9" y="506.7"/>
<use href="#tri" x="700.9" y="506.7"/>
<use href="#tri" x="710.9" y="506.7"/>
<use href="#tri" x="720.9" y="506.7"/>
<use href="#tri" x="730.9" y="506.7"/>
<use href="#tri" x="740.9" y="506.7"/>
<use href="#tri" x="750.9" y="506.7"/>
<use href="#tri" x="760.9" y="506.7"/>
<use href="#tri" x="770.9" y="506.7"/>
<use href="#tri" x="780.9" y="506.7"/>
<use href="#tri" x="790.9" y="506.7"/>
<use href="#tri" x="800.9" y="506.7"/>
<use href="#tri" x="810.9" y="506.7"/>
<use href="#tri" x="820.9" y="506.7"/>
<use href="#tri" x="830.9" y="506.7"/>
<use href="#tri" x="840.9" y="506.7"/>
<use href="#tri" x="850.9" y="506.7"/>
<use href="#tri" x="860.9" y="506.7"/>
<use href="#tri" x="870.9" y="506.7"/>
<use href="#tri" x="880.9" y="506.7"/>
<use href="#tri" x="890.9" y="506.7"/>
<use href="#tri" x="900.9" y="506.7"/>
<use href="#tri" x="910.9" y="506.7"/>
<use href="#tri" x="920.9" y="506.7"/>
<use href="#tri" x="930.9" y="506.7"/>
<use href="#tri" x="940.9" y="506.7"/>
<use href="#tri" x="950.9" y="506.7"/>
<use href="#tri" x="960.9" y="506.7"/>
<use href="#tri" x="970.9" y="506.7"/>
<use href="#tri" x="980.9" y="506.7"/>
<use href="#tri" x="990.9" y="506.7"/>
<use href="#tri" x="1000.9" y="506.7"/>
<use href="#tri" x="1010.9" y="506.7"/>
<use href="#tri" x="1020.9" y="506.7"/>
<use href="#tri" x="1030.9" y="506.7"/>
<use href="#tri" x="1040.9" y="506.7"/>
<use href="#tri" x="1050.9" y="506.7"/>
<use href="#tri" x="1060.9" y="506.7"/>
</g>
<g clip-path="url(#cts)">
<use href="#tri" x="1007.1" y="428.1"/>
<use href="#tri" x="1017.1" y="428.1"/>
<use href="#tri" x="1027.1" y="428.1"/>
<use href="#tri" x="1037.1" y="428.1"/>
<use href="#tri" x="1047.1" y="428.1"/>
<use href="#tri" x="1057.1" y="428.1"/>
<use href="#tri" x="1067.1" y="428.1"/>
<use href="#tri" x="1077.1" y="428.1"/>
<use href="#tri" x="1087.1" y="428.1"/>
<use href="#tri" x="1097.1" y="428.1"/>
<use href="#tri" x="1107.1" y="428.1"/>
<use href="#tri" x="1117.1" y="428.1"/>
<use href="#tri" x="1127.1" y="428.1"/>
<use href="#tri" x="1137.1" y="428.1"/>
<use href="#tri" x="1147.1" y="428.1"/>
<use href="#tri" x="1002.1" y="436.9"/>
<use href="#tri" x="1012.1" y="436.9"/>
<use href="#tri" x="1022.1" y="436.9"/>
<use href="#tri" x="1032.1" y="436.9"/>
<use href="#tri" x="1042.1" y="436.9"/>
<use href="#tri" x="1052.1" y="436.9"/>
<use href="#tri" x="1062.1" y="436.9"/>
<use href="#tri" x="1072.1" y="436.9"/>
<use href="#tri" x="1082.1" y="436.9"/>
<use href="#tri" x="1092.1" y="436.9"/>
<use href="#tri" x="1102.1" y="436.9"/>
<use href="#tri" x="1112.1" y="436.9"/>
<use href="#tri" x="1122.1" y="436.9"/>
<use href="#tri" x="1132.1" y="436.9"/>
<use href="#tri" x="1142.1" y="436.9"/>
<use href="#tri" x="1007.1" y="445.7"/>
<use href="#tri" x="1017.1" y="445.7"/>
<use href="#tri" x="1027.1" y="445.7"/>
<use href="#tri" x="1037.1" y="445.7"/>
<use href="#tri" x="1047.1" y="445.7"/>
<use href="#tri" x="1057.1" y="445.7"/>
<use href="#tri" x="1067.1" y="445.7"/>
<use href="#tri" x="1077.1" y="445.7"/>
<use href="#tri" x="1087.1" y="445.7"/>
<use href="#tri" x="1097.1" y="445.7"/>
<use href="#tri" x="1107.1" y="445.7"/>
<use href="#tri" x="1117.1" y="445.7"/>
<use href="#tri" x="1127.1" y="445.7"/>
<use href="#tri" x="1137.1" y="445.7"/>
<use href="#tri" x="1147.1" y="445.7"/>
<use href="#tri" x="1002.1" y="454.5"/>
<use href="#tri" x="1012.1" y="454.5"/>
<use href="#tri" x="1022.1" y="454.5"/>
<use href="#tri" x="1032.1" y="454.5"/>
<use href="#tri" x="1042.1" y="454.5"/>
<use href="#tri" x="1052.1" y="454.5"/>
<use href="#tri" x="1062.1" y="454.5"/>
<use href="#tri" x="1072.1" y="454.5"/>
<use href="#tri" x="1082.1" y="454.5"/>
<use href="#tri" x="1092.1" y="454.5"/>
<use href="#tri" x="1102.1" y="454.5"/>
<use href="#tri" x="1112.1" y="454.5"/>
<use href="#tri" x="1122.1" y="454.5"/>
<use href="#tri" x="1132.1" y="454.5"/>
<use href="#tri" x="1142.1" y="454.5"/>
</g>
<polyline points="669.30,476.30 943.50,472.20 964.80,501.50 1053.90,501.50 1039.80,481.50" fill="none" stroke="#000" stroke-width="2.2" />
<path d="M717.2,483.2h1.2v1.2h-1.2zM911.2,531.4h1.2v1.2h-1.2zM1041.5,509.1h1.2v1.2h-1.2zM800.5,479.4h1.2v1.2h-1.2zM859.5,536.6h1.2v1.2h-1.2zM1000.4,538.4h1.2v1.2h-1.2zM714.0,510.6h1.2v1.2h-1.2zM746.6,529.9h1.2v1.2h-1.2zM912.3,501.7h1.2v1.2h-1.2zM967.3,522.2h1.2v1.2h-1.2zM952.2,489.5h1.2v1.2h-1.2zM1040.3,535.7h1.2v1.2h-1.2zM806.8,498.9h1.2v1.2h-1.2zM1024.5,524.9h1.2v1.2h-1.2zM744.9,536.4h1.2v1.2h-1.2zM880.5,490.5h1.2v1.2h-1.2zM737.8,483.0h1.2v1.2h-1.2zM849.1,498.2h1.2v1.2h-1.2zM769.6,489.1h1.2v1.2h-1.2zM938.1,513.8h1.2v1.2h-1.2zM713.9,531.6h1.2v1.2h-1.2zM692.3,530.9h1.2v1.2h-1.2zM744.3,494.8h1.2v1.2h-1.2zM1112.2,467.1h1.2v1.2h-1.2zM1004.0,540.0h1.2v1.2h-1.2zM827.1,519.7h1.2v1.2h-1.2zM785.8,539.1h1.2v1.2h-1.2zM881.3,485.7h1.2v1.2h-1.2zM876.9,541.5h1.2v1.2h-1.2zM1084.4,461.0h1.2v1.2h-1.2zM829.1,487.4h1.2v1.2h-1.2zM805.6,511.4h1.2v1.2h-1.2zM1072.8,468.2h1.2v1.2h-1.2zM700.9,479.6h1.2v1.2h-1.2zM817.6,474.8h1.2v1.2h-1.2zM779.1,475.4h1.2v1.2h-1.2zM805.5,520.7h1.2v1.2h-1.2zM793.2,489.1h1.2v1.2h-1.2zM1027.0,520.8h1.2v1.2h-1.2zM842.3,479.9h1.2v1.2h-1.2zM921.1,529.0h1.2v1.2h-1.2zM807.0,524.2h1.2v1.2h-1.2zM890.1,534.3h1.2v1.2h-1.2zM961.9,508.3h1.2v1.2h-1.2zM819.4,494.5h1.2v1.2h-1.2zM786.9,480.9h1.2v1.2h-1.2zM936.6,477.8h1.2v1.2h-1.2zM741.3,533.4h1.2v1.2h-1.2zM930.2,545.0h1.2v1.2h-1.2zM756.7,525.5h1.2v1.2h-1.2zM1070.5,452.4h1.2v1.2h-1.2zM719.9,508.0h1.2v1.2h-1.2zM809.9,508.5h1.2v1.2h-1.2zM1065.2,471.9h1.2v1.2h-1.2zM1036.9,511.2h1.2v1.2h-1.2zM776.3,522.4h1.2v1.2h-1.2zM735.9,487.6h1.2v1.2h-1.2zM829.1,515.6h1.2v1.2h-1.2zM723.0,478.6h1.2v1.2h-1.2zM886.4,512.3h1.2v1.2h-1.2zM875.4,490.8h1.2v1.2h-1.2zM788.2,520.0h1.2v1.2h-1.2zM699.3,530.0h1.2v1.2h-1.2zM1085.3,450.3h1.2v1.2h-1.2zM967.7,511.2h1.2v1.2h-1.2zM868.1,482.6h1.2v1.2h-1.2zM1163.6,472.3h1.2v1.2h-1.2zM940.1,490.2h1.2v1.2h-1.2zM690.3,517.8h1.2v1.2h-1.2zM897.7,508.4h1.2v1.2h-1.2zM1182.1,444.2h1.2v1.2h-1.2zM873.8,525.2h1.2v1.2h-1.2zM1032.6,503.8h1.2v1.2h-1.2zM775.4,521.0h1.2v1.2h-1.2zM792.7,501.2h1.2v1.2h-1.2zM1082.8,483.4h1.2v1.2h-1.2zM696.1,498.7h1.2v1.2h-1.2zM912.3,543.9h1.2v1.2h-1.2zM804.9,474.8h1.2v1.2h-1.2zM745.9,521.6h1.2v1.2h-1.2zM1161.6,459.6h1.2v1.2h-1.2zM1188.6,440.6h1.2v1.2h-1.2zM1054.8,468.0h1.2v1.2h-1.2zM767.7,484.5h1.2v1.2h-1.2zM1099.5,472.9h1.2v1.2h-1.2zM1048.4,528.7h1.2v1.2h-1.2zM875.4,482.8h1.2v1.2h-1.2zM948.1,479.9h1.2v1.2h-1.2zM846.9,484.5h1.2v1.2h-1.2zM697.4,494.0h1.2v1.2h-1.2zM1005.2,527.9h1.2v1.2h-1.2zM890.9,524.9h1.2v1.2h-1.2zM841.0,531.8h1.2v1.2h-1.2zM1122.9,470.5h1.2v1.2h-1.2zM1052.6,477.7h1.2v1.2h-1.2zM1044.1,464.2h1.2v1.2h-1.2zM1040.3,462.8h1.2v1.2h-1.2zM713.6,517.2h1.2v1.2h-1.2zM1007.8,532.1h1.2v1.2h-1.2zM758.5,525.0h1.2v1.2h-1.2zM1043.7,539.0h1.2v1.2h-1.2zM1022.7,529.8h1.2v1.2h-1.2zM840.9,487.4h1.2v1.2h-1.2zM867.1,519.5h1.2v1.2h-1.2zM1035.1,527.8h1.2v1.2h-1.2zM749.1,492.2h1.2v1.2h-1.2zM679.9,487.3h1.2v1.2h-1.2zM818.5,526.3h1.2v1.2h-1.2zM1054.9,497.9h1.2v1.2h-1.2zM775.4,503.9h1.2v1.2h-1.2zM768.9,496.3h1.2v1.2h-1.2zM833.2,523.6h1.2v1.2h-1.2zM1080.1,476.0h1.2v1.2h-1.2zM763.2,519.6h1.2v1.2h-1.2zM1082.2,462.1h1.2v1.2h-1.2zM810.9,521.2h1.2v1.2h-1.2zM765.8,534.2h1.2v1.2h-1.2zM856.7,491.6h1.2v1.2h-1.2zM671.8,504.5h1.2v1.2h-1.2zM669.5,520.6h1.2v1.2h-1.2zM939.9,502.7h1.2v1.2h-1.2zM1009.1,530.0h1.2v1.2h-1.2zM873.6,501.1h1.2v1.2h-1.2zM929.9,493.4h1.2v1.2h-1.2zM719.6,525.0h1.2v1.2h-1.2zM1153.2,471.6h1.2v1.2h-1.2zM749.7,526.7h1.2v1.2h-1.2zM845.1,531.7h1.2v1.2h-1.2zM933.1,524.4h1.2v1.2h-1.2zM1131.4,468.7h1.2v1.2h-1.2zM722.6,498.1h1.2v1.2h-1.2zM941.9,477.7h1.2v1.2h-1.2zM946.3,512.5h1.2v1.2h-1.2zM933.5,476.2h1.2v1.2h-1.2zM755.0,500.7h1.2v1.2h-1.2zM832.0,508.8h1.2v1.2h-1.2zM945.8,511.7h1.2v1.2h-1.2zM1069.4,492.1h1.2v1.2h-1.2zM718.8,512.4h1.2v1.2h-1.2zM1090.3,458.2h1.2v1.2h-1.2zM789.2,534.6h1.2v1.2h-1.2zM966.5,515.3h1.2v1.2h-1.2zM762.0,475.2h1.2v1.2h-1.2zM877.3,525.4h1.2v1.2h-1.2zM993.5,509.2h1.2v1.2h-1.2zM1135.3,454.9h1.2v1.2h-1.2zM719.3,485.4h1.2v1.2h-1.2zM791.5,536.8h1.2v1.2h-1.2zM863.9,496.3h1.2v1.2h-1.2zM807.2,517.0h1.2v1.2h-1.2zM1109.1,460.2h1.2v1.2h-1.2zM1064.2,499.3h1.2v1.2h-1.2zM746.0,527.2h1.2v1.2h-1.2zM789.5,503.4h1.2v1.2h-1.2zM946.3,501.4h1.2v1.2h-1.2zM792.7,484.0h1.2v1.2h-1.2zM779.0,481.5h1.2v1.2h-1.2zM768.6,482.5h1.2v1.2h-1.2zM1135.7,450.1h1.2v1.2h-1.2zM725.2,502.1h1.2v1.2h-1.2zM785.3,536.4h1.2v1.2h-1.2zM681.4,492.3h1.2v1.2h-1.2zM923.7,485.0h1.2v1.2h-1.2zM857.2,507.1h1.2v1.2h-1.2zM771.4,520.8h1.2v1.2h-1.2zM847.9,479.9h1.2v1.2h-1.2zM1055.8,481.4h1.2v1.2h-1.2zM865.7,540.7h1.2v1.2h-1.2zM1153.6,459.7h1.2v1.2h-1.2zM743.5,501.5h1.2v1.2h-1.2zM1032.3,541.5h1.2v1.2h-1.2zM695.1,483.5h1.2v1.2h-1.2zM1163.9,465.0h1.2v1.2h-1.2zM1070.9,462.1h1.2v1.2h-1.2zM832.8,493.4h1.2v1.2h-1.2zM715.6,513.7h1.2v1.2h-1.2zM1098.5,467.9h1.2v1.2h-1.2zM1047.2,466.1h1.2v1.2h-1.2zM717.6,518.2h1.2v1.2h-1.2zM856.8,535.5h1.2v1.2h-1.2zM927.7,516.6h1.2v1.2h-1.2zM845.0,532.8h1.2v1.2h-1.2zM775.3,533.2h1.2v1.2h-1.2zM890.1,476.1h1.2v1.2h-1.2zM1126.3,458.3h1.2v1.2h-1.2zM787.0,485.3h1.2v1.2h-1.2zM1055.6,465.0h1.2v1.2h-1.2zM817.0,540.7h1.2v1.2h-1.2zM818.3,520.4h1.2v1.2h-1.2zM1093.1,463.5h1.2v1.2h-1.2zM763.6,481.1h1.2v1.2h-1.2zM864.9,536.2h1.2v1.2h-1.2zM691.4,486.1h1.2v1.2h-1.2zM944.7,483.3h1.2v1.2h-1.2zM867.5,481.8h1.2v1.2h-1.2zM1119.2,472.2h1.2v1.2h-1.2zM924.3,481.8h1.2v1.2h-1.2zM840.5,504.4h1.2v1.2h-1.2zM698.4,483.1h1.2v1.2h-1.2zM1039.5,546.1h1.2v1.2h-1.2zM987.1,535.0h1.2v1.2h-1.2zM815.9,540.7h1.2v1.2h-1.2zM845.2,497.0h1.2v1.2h-1.2zM962.3,518.3h1.2v1.2h-1.2zM812.8,491.2h1.2v1.2h-1.2zM745.0,529.2h1.2v1.2h-1.2zM1005.5,530.6h1.2v1.2h-1.2zM843.1,530.7h1.2v1.2h-1.2zM800.1,511.0h1.2v1.2h-1.2zM924.2,478.1h1.2v1.2h-1.2zM924.5,478.4h1.2v1.2h-1.2zM905.8,488.3h1.2v1.2h-1.2zM1195.2,436.9h1.2v1.2h-1.2zM975.1,537.3h1.2v1.2h-1.2zM931.1,485.8h1.2v1.2h-1.2zM852.6,524.8h1.2v1.2h-1.2zM1053.5,473.8h1.2v1.2h-1.2zM700.0,537.5h1.2v1.2h-1.2zM920.4,537.4h1.2v1.2h-1.2zM1051.4,472.4h1.2v1.2h-1.2zM831.5,505.7h1.2v1.2h-1.2zM1158.2,463.1h1.2v1.2h-1.2zM774.6,527.5h1.2v1.2h-1.2zM844.1,542.3h1.2v1.2h-1.2zM848.3,516.8h1.2v1.2h-1.2zM767.8,533.8h1.2v1.2h-1.2zM813.0,519.6h1.2v1.2h-1.2zM957.3,519.0h1.2v1.2h-1.2zM975.7,542.3h1.2v1.2h-1.2zM1134.7,463.8h1.2v1.2h-1.2zM678.8,482.3h1.2v1.2h-1.2zM912.6,526.2h1.2v1.2h-1.2zM815.0,494.1h1.2v1.2h-1.2zM1056.8,511.7h1.2v1.2h-1.2zM886.1,498.8h1.2v1.2h-1.2zM804.7,527.7h1.2v1.2h-1.2zM787.4,484.9h1.2v1.2h-1.2zM800.6,514.1h1.2v1.2h-1.2zM892.6,484.9h1.2v1.2h-1.2zM1140.4,469.9h1.2v1.2h-1.2zM778.3,517.8h1.2v1.2h-1.2zM778.0,529.1h1.2v1.2h-1.2zM893.7,496.7h1.2v1.2h-1.2zM902.2,500.8h1.2v1.2h-1.2zM1009.9,503.0h1.2v1.2h-1.2zM812.9,490.5h1.2v1.2h-1.2zM939.3,504.7h1.2v1.2h-1.2zM805.3,520.3h1.2v1.2h-1.2zM742.6,492.7h1.2v1.2h-1.2zM1160.4,459.9h1.2v1.2h-1.2zM1007.0,546.3h1.2v1.2h-1.2zM993.2,506.4h1.2v1.2h-1.2zM899.7,501.0h1.2v1.2h-1.2zM756.4,516.0h1.2v1.2h-1.2zM1017.7,509.0h1.2v1.2h-1.2zM929.1,497.3h1.2v1.2h-1.2zM728.8,488.9h1.2v1.2h-1.2zM996.9,516.6h1.2v1.2h-1.2zM807.9,539.3h1.2v1.2h-1.2zM955.3,536.1h1.2v1.2h-1.2zM822.0,497.3h1.2v1.2h-1.2zM1064.4,505.4h1.2v1.2h-1.2zM835.2,532.5h1.2v1.2h-1.2zM930.7,546.0h1.2v1.2h-1.2zM707.6,529.0h1.2v1.2h-1.2zM830.6,516.5h1.2v1.2h-1.2zM1130.0,463.8h1.2v1.2h-1.2zM866.4,486.2h1.2v1.2h-1.2zM836.5,496.9h1.2v1.2h-1.2zM1052.8,492.7h1.2v1.2h-1.2zM735.8,475.8h1.2v1.2h-1.2zM691.7,527.3h1.2v1.2h-1.2zM671.6,494.4h1.2v1.2h-1.2zM819.4,483.1h1.2v1.2h-1.2zM673.9,531.3h1.2v1.2h-1.2zM834.6,520.7h1.2v1.2h-1.2zM891.4,516.0h1.2v1.2h-1.2zM995.3,531.5h1.2v1.2h-1.2zM764.1,499.9h1.2v1.2h-1.2zM803.4,529.1h1.2v1.2h-1.2zM892.1,496.9h1.2v1.2h-1.2zM784.5,507.9h1.2v1.2h-1.2zM929.9,486.6h1.2v1.2h-1.2zM771.2,489.4h1.2v1.2h-1.2zM1089.1,473.0h1.2v1.2h-1.2zM1026.8,536.9h1.2v1.2h-1.2zM919.8,545.5h1.2v1.2h-1.2zM836.1,511.6h1.2v1.2h-1.2zM1065.7,484.1h1.2v1.2h-1.2zM858.8,524.3h1.2v1.2h-1.2zM1117.0,450.3h1.2v1.2h-1.2zM1105.6,471.1h1.2v1.2h-1.2zM871.6,513.1h1.2v1.2h-1.2zM993.2,536.5h1.2v1.2h-1.2zM843.7,528.2h1.2v1.2h-1.2zM893.1,527.1h1.2v1.2h-1.2zM869.4,538.3h1.2v1.2h-1.2zM731.6,533.1h1.2v1.2h-1.2zM1001.9,547.3h1.2v1.2h-1.2zM1012.1,530.3h1.2v1.2h-1.2zM876.3,518.3h1.2v1.2h-1.2zM850.7,481.8h1.2v1.2h-1.2zM885.3,539.2h1.2v1.2h-1.2zM811.2,495.4h1.2v1.2h-1.2zM884.5,512.8h1.2v1.2h-1.2zM843.3,537.5h1.2v1.2h-1.2zM775.8,487.4h1.2v1.2h-1.2zM1070.7,490.0h1.2v1.2h-1.2zM747.2,517.6h1.2v1.2h-1.2zM900.7,493.4h1.2v1.2h-1.2zM833.1,474.9h1.2v1.2h-1.2zM895.5,504.4h1.2v1.2h-1.2zM971.2,543.8h1.2v1.2h-1.2zM874.7,529.4h1.2v1.2h-1.2zM756.8,539.4h1.2v1.2h-1.2zM920.2,529.6h1.2v1.2h-1.2zM1054.9,458.7h1.2v1.2h-1.2zM854.3,505.4h1.2v1.2h-1.2zM968.3,520.5h1.2v1.2h-1.2zM1026.1,535.1h1.2v1.2h-1.2zM904.1,516.8h1.2v1.2h-1.2z" fill="#888"/>
<path d="M699.8,492.9h2.3v1.1h-2.3zM1002.2,543.9h1.3v1.3h-1.3zM693.7,533.6h2.3v1.1h-2.3zM832.8,528.7h2.3v1.1h-2.3zM977.8,508.1h2.3v1.1h-2.3zM835.8,501.9h1.3v1.3h-1.3zM828.2,526.1l1.8,1.8l-0.8,0.8l-1.8,-1.8zM798.6,500.6h1.3v1.3h-1.3zM731.7,482.5l1.8,1.8l-0.8,0.8l-1.8,-1.8zM749.7,490.7h2.3v1.1h-2.3zM1023.8,522.7h1.3v1.3h-1.3zM1133.9,470.4l1.8,1.8l-0.8,0.8l-1.8,-1.8zM920.7,511.0h2.3v1.1h-2.3zM1105.4,467.0h2.3v1.1h-2.3zM711.8,486.1h1.3v1.3h-1.3zM1127.8,466.3h2.3v1.1h-2.3zM926.5,502.3h2.3v1.1h-2.3zM671.2,482.6h2.3v1.1h-2.3zM969.7,544.6l1.8,1.8l-0.8,0.8l-1.8,-1.8zM942.7,505.6l1.8,1.8l-0.8,0.8l-1.8,-1.8zM853.5,476.2h2.3v1.1h-2.3zM916.4,490.1h2.3v1.1h-2.3zM809.6,530.1h2.3v1.1h-2.3zM807.7,476.5h2.3v1.1h-2.3zM1082.7,472.2h2.3v1.1h-2.3zM789.4,494.0h2.3v1.1h-2.3zM1036.7,545.0h1.3v1.3h-1.3zM923.6,509.7l1.8,1.8l-0.8,0.8l-1.8,-1.8zM1088.0,472.6l1.8,1.8l-0.8,0.8l-1.8,-1.8zM882.1,543.8l1.8,1.8l-0.8,0.8l-1.8,-1.8zM749.3,539.0l1.8,1.8l-0.8,0.8l-1.8,-1.8zM892.4,540.5h1.3v1.3h-1.3zM951.4,494.7h2.3v1.1h-2.3zM671.1,526.7h2.3v1.1h-2.3zM920.4,518.1h1.3v1.3h-1.3zM842.1,494.1h1.3v1.3h-1.3zM816.0,523.6h1.3v1.3h-1.3zM904.4,505.1h1.3v1.3h-1.3zM941.0,514.4h1.3v1.3h-1.3zM1115.0,449.9h2.3v1.1h-2.3zM751.0,517.1h1.3v1.3h-1.3zM1111.0,452.7h1.3v1.3h-1.3zM942.8,473.3h2.3v1.1h-2.3zM838.1,517.8h2.3v1.1h-2.3zM690.0,524.4h2.3v1.1h-2.3zM1103.9,464.0h2.3v1.1h-2.3zM699.5,513.8h1.3v1.3h-1.3zM1005.9,527.0h2.3v1.1h-2.3zM1072.3,467.6h1.3v1.3h-1.3zM677.1,519.0h1.3v1.3h-1.3zM725.4,529.0h1.3v1.3h-1.3zM931.8,530.8h2.3v1.1h-2.3zM851.0,530.5l1.8,1.8l-0.8,0.8l-1.8,-1.8zM1062.4,463.6h2.3v1.1h-2.3zM871.6,489.1h1.3v1.3h-1.3zM775.7,492.5h2.3v1.1h-2.3zM792.6,501.9h1.3v1.3h-1.3zM1067.5,510.3l1.8,1.8l-0.8,0.8l-1.8,-1.8zM748.4,518.0h1.3v1.3h-1.3zM1002.1,519.1l1.8,1.8l-0.8,0.8l-1.8,-1.8zM743.0,494.8h1.3v1.3h-1.3zM1002.3,506.6l1.8,1.8l-0.8,0.8l-1.8,-1.8zM936.1,496.1h1.3v1.3h-1.3zM704.1,519.5h2.3v1.1h-2.3zM1056.3,457.8l1.8,1.8l-0.8,0.8l-1.8,-1.8zM872.1,489.6l1.8,1.8l-0.8,0.8l-1.8,-1.8zM1063.6,469.3h1.3v1.3h-1.3zM811.7,512.0l1.8,1.8l-0.8,0.8l-1.8,-1.8zM943.3,487.9h1.3v1.3h-1.3zM731.9,537.7h2.3v1.1h-2.3zM678.3,487.2l1.8,1.8l-0.8,0.8l-1.8,-1.8zM1171.1,458.4h1.3v1.3h-1.3zM739.4,529.1h1.3v1.3h-1.3zM791.9,538.1h1.3v1.3h-1.3zM930.1,486.3h2.3v1.1h-2.3zM836.8,531.5h2.3v1.1h-2.3zM822.9,477.2h2.3v1.1h-2.3zM860.5,483.7h2.3v1.1h-2.3zM960.6,517.5h2.3v1.1h-2.3zM1057.9,486.3l1.8,1.8l-0.8,0.8l-1.8,-1.8zM736.6,488.8h2.3v1.1h-2.3zM807.1,510.1h2.3v1.1h-2.3zM779.4,539.1h1.3v1.3h-1.3zM971.5,536.9l1.8,1.8l-0.8,0.8l-1.8,-1.8zM888.2,482.0h1.3v1.3h-1.3zM1182.8,448.6h1.3v1.3h-1.3zM1003.3,534.1h2.3v1.1h-2.3zM1045.8,537.9h1.3v1.3h-1.3zM751.0,494.6l1.8,1.8l-0.8,0.8l-1.8,-1.8zM1012.7,522.7h1.3v1.3h-1.3zM1006.9,515.0h2.3v1.1h-2.3zM706.4,494.8h1.3v1.3h-1.3zM1011.3,536.5h1.3v1.3h-1.3zM933.6,512.2h1.3v1.3h-1.3zM848.5,482.8l1.8,1.8l-0.8,0.8l-1.8,-1.8zM774.2,526.5l1.8,1.8l-0.8,0.8l-1.8,-1.8zM1104.4,460.8h2.3v1.1h-2.3zM787.6,482.4h1.3v1.3h-1.3zM1186.3,450.5h2.3v1.1h-2.3zM685.9,511.1h2.3v1.1h-2.3zM695.2,488.9h2.3v1.1h-2.3zM1157.3,456.4h2.3v1.1h-2.3zM887.1,528.2l1.8,1.8l-0.8,0.8l-1.8,-1.8zM808.2,517.1h2.3v1.1h-2.3zM1005.6,543.4h2.3v1.1h-2.3zM802.3,483.9h1.3v1.3h-1.3zM1161.8,455.2l1.8,1.8l-0.8,0.8l-1.8,-1.8zM861.1,524.7h2.3v1.1h-2.3zM773.8,521.3h2.3v1.1h-2.3zM933.7,516.3h1.3v1.3h-1.3zM793.4,482.4h1.3v1.3h-1.3zM1115.5,468.1h1.3v1.3h-1.3zM867.0,519.6h2.3v1.1h-2.3zM750.4,536.6h1.3v1.3h-1.3zM978.7,541.9h2.3v1.1h-2.3zM725.2,503.2h1.3v1.3h-1.3zM784.6,476.8h2.3v1.1h-2.3zM987.3,509.6h2.3v1.1h-2.3zM878.9,497.8h1.3v1.3h-1.3zM1055.6,457.6h2.3v1.1h-2.3zM716.3,506.2h2.3v1.1h-2.3zM726.8,490.9l1.8,1.8l-0.8,0.8l-1.8,-1.8zM1182.4,456.9h2.3v1.1h-2.3zM1106.8,452.6l1.8,1.8l-0.8,0.8l-1.8,-1.8zM1109.3,455.2h2.3v1.1h-2.3zM881.3,494.1h2.3v1.1h-2.3zM690.8,499.2l1.8,1.8l-0.8,0.8l-1.8,-1.8zM689.2,531.2h2.3v1.1h-2.3zM892.1,501.6h1.3v1.3h-1.3zM793.9,522.6l1.8,1.8l-0.8,0.8l-1.8,-1.8zM737.2,483.9h2.3v1.1h-2.3zM903.7,493.2h2.3v1.1h-2.3zM815.0,528.6h2.3v1.1h-2.3zM935.7,540.7h2.3v1.1h-2.3zM808.6,492.7h2.3v1.1h-2.3zM1029.9,537.9h2.3v1.1h-2.3zM950.8,507.8h2.3v1.1h-2.3zM977.0,536.4h2.3v1.1h-2.3zM878.4,526.5h2.3v1.1h-2.3zM860.3,522.7h1.3v1.3h-1.3zM762.9,520.3h2.3v1.1h-2.3zM1104.3,463.4h1.3v1.3h-1.3zM748.3,505.5h1.3v1.3h-1.3zM941.2,537.9h2.3v1.1h-2.3zM789.7,509.8h2.3v1.1h-2.3zM788.1,501.7h1.3v1.3h-1.3zM777.4,506.4h1.3v1.3h-1.3zM1084.3,480.6h2.3v1.1h-2.3zM675.1,508.8h1.3v1.3h-1.3zM855.0,508.9h1.3v1.3h-1.3zM801.0,538.8h2.3v1.1h-2.3zM961.5,543.1h2.3v1.1h-2.3zM774.9,504.5h1.3v1.3h-1.3zM1009.7,528.4h2.3v1.1h-2.3zM694.7,537.2l1.8,1.8l-0.8,0.8l-1.8,-1.8zM916.1,520.0h1.3v1.3h-1.3zM847.2,521.0l1.8,1.8l-0.8,0.8l-1.8,-1.8zM810.2,498.2h1.3v1.3h-1.3zM784.2,536.1h2.3v1.1h-2.3zM918.3,531.4l1.8,1.8l-0.8,0.8l-1.8,-1.8zM1053.8,500.2h2.3v1.1h-2.3zM781.6,506.2h2.3v1.1h-2.3zM691.1,514.3h1.3v1.3h-1.3zM1039.1,519.5h2.3v1.1h-2.3zM687.3,532.3l1.8,1.8l-0.8,0.8l-1.8,-1.8zM1005.7,529.7h1.3v1.3h-1.3zM721.0,521.9h2.3v1.1h-2.3zM838.5,483.2h2.3v1.1h-2.3zM1049.1,476.7h2.3v1.1h-2.3zM685.5,481.9h1.3v1.3h-1.3zM1079.5,474.2l1.8,1.8l-0.8,0.8l-1.8,-1.8zM1104.3,453.8h2.3v1.1h-2.3zM671.3,490.9h1.3v1.3h-1.3zM1092.1,455.4h1.3v1.3h-1.3zM853.4,530.5h2.3v1.1h-2.3zM1170.2,466.9h2.3v1.1h-2.3zM727.4,507.8h2.3v1.1h-2.3zM857.8,480.5h2.3v1.1h-2.3zM870.4,536.5h2.3v1.1h-2.3zM913.7,495.7l1.8,1.8l-0.8,0.8l-1.8,-1.8zM1068.8,509.0h2.3v1.1h-2.3zM1063.0,453.7h1.3v1.3h-1.3zM778.6,479.0h2.3v1.1h-2.3zM880.9,525.8l1.8,1.8l-0.8,0.8l-1.8,-1.8zM934.8,507.4h1.3v1.3h-1.3zM744.3,504.0h2.3v1.1h-2.3zM897.3,500.6l1.8,1.8l-0.8,0.8l-1.8,-1.8zM835.2,506.9h2.3v1.1h-2.3zM891.8,524.8l1.8,1.8l-0.8,0.8l-1.8,-1.8zM893.9,486.8h1.3v1.3h-1.3zM766.2,509.9l1.8,1.8l-0.8,0.8l-1.8,-1.8zM689.3,497.0h2.3v1.1h-2.3zM1049.9,493.4h1.3v1.3h-1.3zM886.9,544.0h2.3v1.1h-2.3zM891.3,482.8l1.8,1.8l-0.8,0.8l-1.8,-1.8zM1008.2,529.0l1.8,1.8l-0.8,0.8l-1.8,-1.8zM1120.7,465.0h2.3v1.1h-2.3zM803.6,483.4h2.3v1.1h-2.3zM670.4,517.7h2.3v1.1h-2.3zM923.6,483.7h1.3v1.3h-1.3zM793.1,524.1h2.3v1.1h-2.3zM750.1,538.9l1.8,1.8l-0.8,0.8l-1.8,-1.8zM758.2,537.4h1.3v1.3h-1.3zM1114.4,456.9l1.8,1.8l-0.8,0.8l-1.8,-1.8zM950.9,520.1h1.3v1.3h-1.3zM743.0,491.2h2.3v1.1h-2.3zM929.9,491.8h1.3v1.3h-1.3zM709.0,507.9h1.3v1.3h-1.3zM684.1,504.7l1.8,1.8l-0.8,0.8l-1.8,-1.8zM687.0,517.3h1.3v1.3h-1.3zM848.8,534.0h2.3v1.1h-2.3zM921.0,495.0l1.8,1.8l-0.8,0.8l-1.8,-1.8zM780.9,484.5h1.3v1.3h-1.3zM963.2,529.9h2.3v1.1h-2.3zM1016.6,525.9h2.3v1.1h-2.3zM980.4,507.6l1.8,1.8l-0.8,0.8l-1.8,-1.8zM992.2,510.3l1.8,1.8l-0.8,0.8l-1.8,-1.8zM996.5,506.7l1.8,1.8l-0.8,0.8l-1.8,-1.8zM985.6,513.0h2.3v1.1h-2.3zM829.4,482.9h2.3v1.1h-2.3zM698.0,499.8h2.3v1.1h-2.3zM732.1,528.0h1.3v1.3h-1.3zM676.5,478.9h1.3v1.3h-1.3zM921.5,481.8h2.3v1.1h-2.3zM671.5,513.3h2.3v1.1h-2.3zM1051.0,462.1l1.8,1.8l-0.8,0.8l-1.8,-1.8zM713.8,506.9l1.8,1.8l-0.8,0.8l-1.8,-1.8zM913.6,542.2h2.3v1.1h-2.3zM1014.5,528.8h2.3v1.1h-2.3zM834.2,518.6h2.3v1.1h-2.3zM700.7,476.6h1.3v1.3h-1.3zM902.0,512.5h2.3v1.1h-2.3zM1092.4,476.1h1.3v1.3h-1.3zM1108.4,472.5h1.3v1.3h-1.3zM896.6,537.0h2.3v1.1h-2.3zM1097.8,466.9h2.3v1.1h-2.3zM808.7,483.0h1.3v1.3h-1.3zM691.5,530.7l1.8,1.8l-0.8,0.8l-1.8,-1.8zM814.4,532.7l1.8,1.8l-0.8,0.8l-1.8,-1.8zM1032.5,540.0h2.3v1.1h-2.3zM714.2,498.2l1.8,1.8l-0.8,0.8l-1.8,-1.8zM793.3,504.4l1.8,1.8l-0.8,0.8l-1.8,-1.8zM804.3,521.1l1.8,1.8l-0.8,0.8l-1.8,-1.8zM922.1,502.4h2.3v1.1h-2.3zM1041.3,476.1h1.3v1.3h-1.3zM882.7,494.0h2.3v1.1h-2.3zM1005.0,525.3h2.3v1.1h-2.3zM703.1,503.4h2.3v1.1h-2.3zM805.6,499.5h1.3v1.3h-1.3zM877.7,486.0h2.3v1.1h-2.3zM694.0,525.2l1.8,1.8l-0.8,0.8l-1.8,-1.8zM1012.4,548.3h2.3v1.1h-2.3zM983.1,521.9h2.3v1.1h-2.3zM734.9,489.8h2.3v1.1h-2.3zM1049.8,456.6h2.3v1.1h-2.3zM743.2,485.9h2.3v1.1h-2.3zM849.4,529.5h1.3v1.3h-1.3zM745.8,535.0h2.3v1.1h-2.3zM813.0,531.4h2.3v1.1h-2.3zM758.1,491.0h2.3v1.1h-2.3zM677.5,527.6h2.3v1.1h-2.3zM784.9,500.3h2.3v1.1h-2.3zM764.6,523.4l1.8,1.8l-0.8,0.8l-1.8,-1.8zM715.4,504.6h1.3v1.3h-1.3zM994.2,516.1l1.8,1.8l-0.8,0.8l-1.8,-1.8zM703.9,519.0h2.3v1.1h-2.3zM922.1,535.2h2.3v1.1h-2.3zM767.8,530.5h2.3v1.1h-2.3zM755.8,477.1h1.3v1.3h-1.3zM671.5,494.3h1.3v1.3h-1.3zM839.4,516.5h2.3v1.1h-2.3zM931.7,493.5h1.3v1.3h-1.3zM802.0,528.8h2.3v1.1h-2.3zM720.2,515.1h2.3v1.1h-2.3zM678.4,503.5h1.3v1.3h-1.3zM946.7,515.5h2.3v1.1h-2.3zM931.1,492.1h2.3v1.1h-2.3zM733.8,481.1h2.3v1.1h-2.3zM983.3,533.9h2.3v1.1h-2.3zM973.2,520.6h2.3v1.1h-2.3zM1081.5,473.3h2.3v1.1h-2.3zM1165.1,462.9h1.3v1.3h-1.3zM898.9,492.6h2.3v1.1h-2.3zM956.9,541.2h1.3v1.3h-1.3zM802.1,494.4h1.3v1.3h-1.3zM1173.9,467.4h2.3v1.1h-2.3zM984.6,544.9h1.3v1.3h-1.3zM811.5,488.1h1.3v1.3h-1.3zM959.1,531.4h1.3v1.3h-1.3zM971.8,509.4h2.3v1.1h-2.3zM1046.2,487.5h1.3v1.3h-1.3zM786.7,493.4h2.3v1.1h-2.3zM856.3,534.0h2.3v1.1h-2.3zM825.9,523.6h2.3v1.1h-2.3zM704.5,535.1h1.3v1.3h-1.3zM701.9,479.0h1.3v1.3h-1.3zM1061.2,451.9h2.3v1.1h-2.3zM856.2,512.3h1.3v1.3h-1.3zM943.9,519.7l1.8,1.8l-0.8,0.8l-1.8,-1.8zM1072.4,489.1l1.8,1.8l-0.8,0.8l-1.8,-1.8zM1045.2,540.1h2.3v1.1h-2.3zM933.4,545.7h1.3v1.3h-1.3zM909.2,487.1l1.8,1.8l-0.8,0.8l-1.8,-1.8zM824.5,479.3h1.3v1.3h-1.3zM934.3,485.5h2.3v1.1h-2.3zM1178.1,457.7h1.3v1.3h-1.3zM694.2,499.5h1.3v1.3h-1.3zM943.8,494.0l1.8,1.8l-0.8,0.8l-1.8,-1.8zM875.8,475.5h1.3v1.3h-1.3zM721.6,477.4h2.3v1.1h-2.3zM927.4,485.1h1.3v1.3h-1.3zM950.5,528.6h2.3v1.1h-2.3zM727.7,537.8l1.8,1.8l-0.8,0.8l-1.8,-1.8zM940.7,492.6h2.3v1.1h-2.3zM765.9,507.1h1.3v1.3h-1.3zM887.5,525.4h2.3v1.1h-2.3zM830.7,531.7h1.3v1.3h-1.3zM933.4,498.2h2.3v1.1h-2.3zM752.2,522.1h2.3v1.1h-2.3zM946.4,529.5h1.3v1.3h-1.3zM675.6,523.4h2.3v1.1h-2.3zM1048.9,475.0h2.3v1.1h-2.3zM854.3,486.2h2.3v1.1h-2.3zM698.0,537.3h1.3v1.3h-1.3zM1102.2,469.2h1.3v1.3h-1.3zM1173.3,462.2h2.3v1.1h-2.3zM1050.5,459.7h2.3v1.1h-2.3zM1090.0,462.2h2.3v1.1h-2.3zM734.5,529.8h2.3v1.1h-2.3zM687.5,511.1h2.3v1.1h-2.3zM751.8,515.9h2.3v1.1h-2.3zM812.2,530.9h2.3v1.1h-2.3zM904.4,531.0l1.8,1.8l-0.8,0.8l-1.8,-1.8zM799.8,504.6h2.3v1.1h-2.3zM941.4,496.9h2.3v1.1h-2.3zM1078.8,478.6h1.3v1.3h-1.3zM763.0,532.7h2.3v1.1h-2.3zM1049.6,466.8h2.3v1.1h-2.3zM684.7,512.8h1.3v1.3h-1.3zM855.6,481.9h1.3v1.3h-1.3zM856.0,506.9h2.3v1.1h-2.3zM1058.8,516.7h2.3v1.1h-2.3zM834.1,508.0h2.3v1.1h-2.3zM1049.5,463.5h1.3v1.3h-1.3zM669.5,530.8l1.8,1.8l-0.8,0.8l-1.8,-1.8zM728.0,525.8h2.3v1.1h-2.3zM714.7,514.6h2.3v1.1h-2.3zM697.8,515.0h1.3v1.3h-1.3zM940.8,541.7h2.3v1.1h-2.3zM1042.2,527.5h2.3v1.1h-2.3zM959.1,546.5h1.3v1.3h-1.3zM1044.4,511.8h2.3v1.1h-2.3zM797.3,493.8h1.3v1.3h-1.3zM828.0,536.6h2.3v1.1h-2.3zM1072.8,453.6h1.3v1.3h-1.3zM773.7,515.4h1.3v1.3h-1.3zM917.9,476.1h2.3v1.1h-2.3zM928.6,484.4h2.3v1.1h-2.3zM1002.3,542.5h1.3v1.3h-1.3zM1063.2,471.9h2.3v1.1h-2.3zM1107.2,471.1h2.3v1.1h-2.3zM1110.5,461.8h2.3v1.1h-2.3zM970.0,506.9l1.8,1.8l-0.8,0.8l-1.8,-1.8zM931.5,491.9h2.3v1.1h-2.3zM828.1,501.4h2.3v1.1h-2.3zM1086.9,483.4h2.3v1.1h-2.3zM892.7,473.3h1.3v1.3h-1.3zM904.3,499.4h2.3v1.1h-2.3zM998.2,528.1h2.3v1.1h-2.3zM1028.2,504.7h2.3v1.1h-2.3zM972.3,544.5h1.3v1.3h-1.3zM851.4,536.7h2.3v1.1h-2.3zM769.3,512.7h1.3v1.3h-1.3zM714.2,510.6h2.3v1.1h-2.3zM950.4,499.5h2.3v1.1h-2.3zM728.6,534.0h2.3v1.1h-2.3zM719.4,495.6h2.3v1.1h-2.3zM928.8,498.3h2.3v1.1h-2.3zM941.5,502.3h2.3v1.1h-2.3zM902.4,534.2h1.3v1.3h-1.3zM1048.5,521.8h2.3v1.1h-2.3zM723.2,530.3h2.3v1.1h-2.3zM968.0,523.9h2.3v1.1h-2.3zM794.8,477.2h2.3v1.1h-2.3zM828.3,516.1h1.3v1.3h-1.3zM758.2,520.5h2.3v1.1h-2.3zM960.4,527.2h2.3v1.1h-2.3zM906.2,531.2h1.3v1.3h-1.3zM727.6,526.9h2.3v1.1h-2.3zM745.6,535.5h1.3v1.3h-1.3zM765.8,528.9l1.8,1.8l-0.8,0.8l-1.8,-1.8zM877.5,489.2h2.3v1.1h-2.3zM783.9,537.7h1.3v1.3h-1.3zM860.7,488.3h1.3v1.3h-1.3zM875.0,475.0h2.3v1.1h-2.3zM814.1,492.0h2.3v1.1h-2.3zM687.1,499.0l1.8,1.8l-0.8,0.8l-1.8,-1.8zM1005.2,507.6h2.3v1.1h-2.3zM830.4,522.5l1.8,1.8l-0.8,0.8l-1.8,-1.8zM939.2,507.7h2.3v1.1h-2.3zM924.7,476.6h2.3v1.1h-2.3zM793.7,474.5h2.3v1.1h-2.3zM672.8,535.0h1.3v1.3h-1.3zM905.6,500.0h2.3v1.1h-2.3zM849.8,540.9h1.3v1.3h-1.3zM858.6,523.8h1.3v1.3h-1.3zM926.3,538.3h2.3v1.1h-2.3zM1043.0,459.3h2.3v1.1h-2.3zM1008.8,541.1h2.3v1.1h-2.3zM842.5,520.9h1.3v1.3h-1.3zM884.2,512.8h2.3v1.1h-2.3zM699.5,482.1h2.3v1.1h-2.3zM931.5,503.4h2.3v1.1h-2.3zM1193.4,440.5h1.3v1.3h-1.3zM1053.5,472.2h2.3v1.1h-2.3zM955.0,502.3h1.3v1.3h-1.3zM1018.1,503.8h2.3v1.1h-2.3zM1062.5,463.9l1.8,1.8l-0.8,0.8l-1.8,-1.8zM946.9,543.1h2.3v1.1h-2.3zM673.8,489.2h1.3v1.3h-1.3zM790.2,521.8h2.3v1.1h-2.3zM700.9,492.2h1.3v1.3h-1.3zM933.9,507.8h2.3v1.1h-2.3zM841.0,538.8h2.3v1.1h-2.3zM776.9,522.1h1.3v1.3h-1.3zM784.0,500.1h2.3v1.1h-2.3zM926.8,537.4h2.3v1.1h-2.3zM1031.6,503.3h1.3v1.3h-1.3zM976.6,536.4h2.3v1.1h-2.3zM749.1,519.4h2.3v1.1h-2.3zM758.6,513.2h2.3v1.1h-2.3zM849.3,540.5l1.8,1.8l-0.8,0.8l-1.8,-1.8zM689.1,492.6h2.3v1.1h-2.3zM837.1,535.9h2.3v1.1h-2.3zM1061.0,492.1h2.3v1.1h-2.3zM1057.4,465.7h2.3v1.1h-2.3zM691.9,493.0h2.3v1.1h-2.3zM674.6,513.8h1.3v1.3h-1.3zM957.8,497.7l1.8,1.8l-0.8,0.8l-1.8,-1.8zM1050.1,480.3h2.3v1.1h-2.3zM874.5,478.7h2.3v1.1h-2.3zM804.2,504.9h2.3v1.1h-2.3zM730.7,531.8l1.8,1.8l-0.8,0.8l-1.8,-1.8zM793.5,507.0l1.8,1.8l-0.8,0.8l-1.8,-1.8zM870.2,516.6h2.3v1.1h-2.3zM948.4,505.1l1.8,1.8l-0.8,0.8l-1.8,-1.8zM840.1,507.0h1.3v1.3h-1.3zM787.6,505.1h2.3v1.1h-2.3zM1052.1,494.6h1.3v1.3h-1.3zM947.2,495.2l1.8,1.8l-0.8,0.8l-1.8,-1.8zM871.5,530.5l1.8,1.8l-0.8,0.8l-1.8,-1.8zM858.4,527.2h1.3v1.3h-1.3zM923.0,526.6l1.8,1.8l-0.8,0.8l-1.8,-1.8zM748.6,512.9h2.3v1.1h-2.3zM865.9,473.5h2.3v1.1h-2.3zM763.7,517.3h2.3v1.1h-2.3zM1006.8,533.6h2.3v1.1h-2.3zM893.7,525.9h1.3v1.3h-1.3zM904.0,476.6l1.8,1.8l-0.8,0.8l-1.8,-1.8zM825.8,481.3h1.3v1.3h-1.3zM1047.0,477.2h1.3v1.3h-1.3zM1070.5,478.0h1.3v1.3h-1.3zM932.7,538.6l1.8,1.8l-0.8,0.8l-1.8,-1.8zM682.6,502.8h1.3v1.3h-1.3zM914.4,531.4h2.3v1.1h-2.3zM920.5,537.3h1.3v1.3h-1.3zM1025.0,519.9h2.3v1.1h-2.3zM690.6,512.9h1.3v1.3h-1.3zM710.0,528.8h2.3v1.1h-2.3zM715.9,521.4h1.3v1.3h-1.3zM698.2,513.0l1.8,1.8l-0.8,0.8l-1.8,-1.8zM804.4,533.6h1.3v1.3h-1.3zM940.3,482.7h2.3v1.1h-2.3zM830.7,534.5l1.8,1.8l-0.8,0.8l-1.8,-1.8zM1123.9,463.8h2.3v1.1h-2.3zM696.7,496.3h2.3v1.1h-2.3zM915.5,490.7h1.3v1.3h-1.3zM863.2,527.0h2.3v1.1h-2.3zM814.3,526.3h2.3v1.1h-2.3zM1046.3,527.1h1.3v1.3h-1.3zM910.4,542.4h1.3v1.3h-1.3zM899.3,508.2h2.3v1.1h-2.3zM1026.8,512.3h2.3v1.1h-2.3zM781.1,531.2h2.3v1.1h-2.3zM1156.4,458.0h2.3v1.1h-2.3zM889.2,510.4h2.3v1.1h-2.3zM1113.0,468.1h2.3v1.1h-2.3zM870.8,508.3h2.3v1.1h-2.3zM915.6,518.5h1.3v1.3h-1.3zM823.4,474.4l1.8,1.8l-0.8,0.8l-1.8,-1.8zM932.7,541.9h2.3v1.1h-2.3zM926.4,534.2h1.3v1.3h-1.3zM789.6,541.3h2.3v1.1h-2.3zM987.0,546.2h2.3v1.1h-2.3zM1063.2,454.7l1.8,1.8l-0.8,0.8l-1.8,-1.8zM961.9,525.4h1.3v1.3h-1.3zM868.0,510.9h2.3v1.1h-2.3zM718.9,536.0h2.3v1.1h-2.3zM932.4,496.2h2.3v1.1h-2.3zM953.3,492.8h2.3v1.1h-2.3zM774.0,480.8h2.3v1.1h-2.3zM1067.3,451.8h2.3v1.1h-2.3zM685.4,479.6h1.3v1.3h-1.3zM824.0,537.3h2.3v1.1h-2.3zM985.1,524.9l1.8,1.8l-0.8,0.8l-1.8,-1.8zM987.2,548.0h2.3v1.1h-2.3zM997.3,514.3l1.8,1.8l-0.8,0.8l-1.8,-1.8zM850.6,528.0h1.3v1.3h-1.3zM799.0,519.1l1.8,1.8l-0.8,0.8l-1.8,-1.8zM1068.0,507.8h2.3v1.1h-2.3zM1001.0,532.1l1.8,1.8l-0.8,0.8l-1.8,-1.8zM718.1,517.2h2.3v1.1h-2.3zM1026.2,520.5h2.3v1.1h-2.3zM951.3,543.7h2.3v1.1h-2.3zM802.8,531.3h2.3v1.1h-2.3zM774.1,487.1h2.3v1.1h-2.3zM930.6,539.3l1.8,1.8l-0.8,0.8l-1.8,-1.8zM1046.2,479.5l1.8,1.8l-0.8,0.8l-1.8,-1.8zM1015.5,531.0h2.3v1.1h-2.3zM984.9,531.0l1.8,1.8l-0.8,0.8l-1.8,-1.8zM671.4,490.7h2.3v1.1h-2.3zM727.7,528.2h2.3v1.1h-2.3zM856.8,532.0h1.3v1.3h-1.3zM812.9,515.3h1.3v1.3h-1.3zM1020.0,527.6h2.3v1.1h-2.3zM1106.0,455.4h2.3v1.1h-2.3zM788.1,537.2h1.3v1.3h-1.3zM934.3,544.9h1.3v1.3h-1.3zM1110.1,452.8h1.3v1.3h-1.3zM1098.8,463.1h2.3v1.1h-2.3zM709.3,506.4h1.3v1.3h-1.3zM1020.1,507.3h2.3v1.1h-2.3zM699.3,530.8l1.8,1.8l-0.8,0.8l-1.8,-1.8zM1056.0,521.0h2.3v1.1h-2.3zM745.7,502.2h1.3v1.3h-1.3zM693.8,479.5l1.8,1.8l-0.8,0.8l-1.8,-1.8zM1073.9,467.8h1.3v1.3h-1.3zM1013.5,527.4l1.8,1.8l-0.8,0.8l-1.8,-1.8zM1045.9,514.1h2.3v1.1h-2.3zM1090.4,474.3h2.3v1.1h-2.3zM943.0,535.8h2.3v1.1h-2.3zM1061.1,453.8h2.3v1.1h-2.3zM1179.9,455.7h2.3v1.1h-2.3zM1170.1,456.9h2.3v1.1h-2.3zM807.2,479.7h2.3v1.1h-2.3zM777.3,539.4h1.3v1.3h-1.3zM1082.5,470.5h2.3v1.1h-2.3zM1071.0,488.5h1.3v1.3h-1.3zM1025.1,521.3h2.3v1.1h-2.3zM861.6,540.4h1.3v1.3h-1.3zM822.1,507.1h2.3v1.1h-2.3zM856.8,543.0h2.3v1.1h-2.3zM960.3,521.4l1.8,1.8l-0.8,0.8l-1.8,-1.8zM888.2,527.7h2.3v1.1h-2.3zM1005.6,514.3l1.8,1.8l-0.8,0.8l-1.8,-1.8zM878.5,543.1l1.8,1.8l-0.8,0.8l-1.8,-1.8zM850.5,479.5l1.8,1.8l-0.8,0.8l-1.8,-1.8zM704.0,481.9h1.3v1.3h-1.3zM1114.2,451.5l1.8,1.8l-0.8,0.8l-1.8,-1.8zM1042.9,515.6h1.3v1.3h-1.3zM989.4,529.6h2.3v1.1h-2.3zM1114.3,471.7h2.3v1.1h-2.3zM905.7,498.4l1.8,1.8l-0.8,0.8l-1.8,-1.8zM690.0,530.0h2.3v1.1h-2.3zM788.2,507.0h2.3v1.1h-2.3zM844.8,499.9h2.3v1.1h-2.3zM685.2,524.3h2.3v1.1h-2.3zM937.0,483.2h2.3v1.1h-2.3zM1003.5,518.0h1.3v1.3h-1.3zM881.5,493.4h1.3v1.3h-1.3zM706.9,489.4h2.3v1.1h-2.3zM910.1,513.2l1.8,1.8l-0.8,0.8l-1.8,-1.8zM910.4,473.6h2.3v1.1h-2.3zM772.1,519.4h1.3v1.3h-1.3zM1042.7,456.8h2.3v1.1h-2.3zM750.7,524.2h1.3v1.3h-1.3zM726.8,499.4h1.3v1.3h-1.3zM1057.9,478.6l1.8,1.8l-0.8,0.8l-1.8,-1.8zM673.8,530.3l1.8,1.8l-0.8,0.8l-1.8,-1.8zM1000.7,536.7h1.3v1.3h-1.3zM798.3,539.1h2.3v1.1h-2.3zM724.2,502.6h2.3v1.1h-2.3zM775.1,486.9h1.3v1.3h-1.3zM1006.9,516.0h1.3v1.3h-1.3zM704.9,518.0h2.3v1.1h-2.3zM918.9,480.4l1.8,1.8l-0.8,0.8l-1.8,-1.8zM1048.0,461.8h1.3v1.3h-1.3zM744.3,539.4h1.3v1.3h-1.3zM1005.6,520.0h2.3v1.1h-2.3zM1163.2,459.5l1.8,1.8l-0.8,0.8l-1.8,-1.8zM1157.1,464.5h2.3v1.1h-2.3zM678.7,521.8h2.3v1.1h-2.3zM768.3,527.6h2.3v1.1h-2.3zM998.1,503.0l1.8,1.8l-0.8,0.8l-1.8,-1.8zM1073.8,451.1h1.3v1.3h-1.3zM729.4,514.3h1.3v1.3h-1.3zM945.2,486.9h2.3v1.1h-2.3zM1030.5,532.6h1.3v1.3h-1.3zM903.6,516.0h2.3v1.1h-2.3zM828.6,474.4h2.3v1.1h-2.3zM1016.3,542.1l1.8,1.8l-0.8,0.8l-1.8,-1.8zM1068.7,465.8h2.3v1.1h-2.3zM843.5,523.4l1.8,1.8l-0.8,0.8l-1.8,-1.8zM1107.3,470.4h1.3v1.3h-1.3zM754.6,495.6h1.3v1.3h-1.3zM954.9,542.8h2.3v1.1h-2.3zM1182.7,444.4h2.3v1.1h-2.3zM821.6,539.2h2.3v1.1h-2.3zM762.6,484.8l1.8,1.8l-0.8,0.8l-1.8,-1.8zM1035.7,520.5l1.8,1.8l-0.8,0.8l-1.8,-1.8zM683.7,514.2h2.3v1.1h-2.3zM1010.6,502.6h1.3v1.3h-1.3zM986.5,514.6h2.3v1.1h-2.3zM1077.6,454.6h2.3v1.1h-2.3zM830.0,481.4l1.8,1.8l-0.8,0.8l-1.8,-1.8zM905.3,518.5h2.3v1.1h-2.3zM769.9,539.0h2.3v1.1h-2.3zM1019.1,502.1h1.3v1.3h-1.3zM872.4,509.7h1.3v1.3h-1.3zM676.9,532.9h2.3v1.1h-2.3zM1052.7,450.0l1.8,1.8l-0.8,0.8l-1.8,-1.8zM802.6,476.5h1.3v1.3h-1.3zM1091.7,467.1h2.3v1.1h-2.3zM1075.1,460.0h2.3v1.1h-2.3zM785.3,478.6h2.3v1.1h-2.3zM1021.4,531.0h2.3v1.1h-2.3zM684.6,484.8h2.3v1.1h-2.3zM913.2,516.5h2.3v1.1h-2.3zM731.5,489.6h2.3v1.1h-2.3zM791.5,485.1h2.3v1.1h-2.3zM705.1,475.9h1.3v1.3h-1.3zM759.6,534.3h2.3v1.1h-2.3zM778.0,510.9h2.3v1.1h-2.3zM674.8,509.7h1.3v1.3h-1.3zM682.0,488.6l1.8,1.8l-0.8,0.8l-1.8,-1.8zM934.0,504.2h1.3v1.3h-1.3zM864.3,538.7h2.3v1.1h-2.3zM688.1,484.9h2.3v1.1h-2.3zM770.7,520.9h1.3v1.3h-1.3zM1172.6,461.0h1.3v1.3h-1.3zM940.7,544.0h1.3v1.3h-1.3zM783.9,530.7h2.3v1.1h-2.3zM839.9,481.2h2.3v1.1h-2.3zM910.2,499.2l1.8,1.8l-0.8,0.8l-1.8,-1.8zM757.9,501.9h1.3v1.3h-1.3zM886.1,537.1h1.3v1.3h-1.3zM950.1,532.5l1.8,1.8l-0.8,0.8l-1.8,-1.8zM1018.5,502.0l1.8,1.8l-0.8,0.8l-1.8,-1.8zM765.4,514.3h2.3v1.1h-2.3zM794.6,476.5h1.3v1.3h-1.3zM1062.6,506.4h1.3v1.3h-1.3zM1025.9,526.8h2.3v1.1h-2.3zM921.4,512.6l1.8,1.8l-0.8,0.8l-1.8,-1.8zM1146.9,461.0l1.8,1.8l-0.8,0.8l-1.8,-1.8zM860.0,510.9l1.8,1.8l-0.8,0.8l-1.8,-1.8zM884.7,482.8h2.3v1.1h-2.3zM978.2,543.3h1.3v1.3h-1.3zM857.9,515.7h1.3v1.3h-1.3zM762.1,489.9h2.3v1.1h-2.3zM1009.9,507.6l1.8,1.8l-0.8,0.8l-1.8,-1.8zM1182.1,456.8l1.8,1.8l-0.8,0.8l-1.8,-1.8zM677.0,496.0l1.8,1.8l-0.8,0.8l-1.8,-1.8zM890.6,489.5h2.3v1.1h-2.3zM1000.4,514.8h2.3v1.1h-2.3zM850.4,491.0h2.3v1.1h-2.3zM1049.7,460.6l1.8,1.8l-0.8,0.8l-1.8,-1.8zM1044.8,527.3l1.8,1.8l-0.8,0.8l-1.8,-1.8zM806.3,483.1h1.3v1.3h-1.3zM1053.6,459.6h2.3v1.1h-2.3zM1008.7,514.2h1.3v1.3h-1.3zM1147.9,457.7h2.3v1.1h-2.3zM1090.8,469.9h2.3v1.1h-2.3zM695.1,493.6h2.3v1.1h-2.3zM732.5,492.8h1.3v1.3h-1.3zM861.7,517.1h1.3v1.3h-1.3zM706.2,478.9h1.3v1.3h-1.3zM803.1,511.5h2.3v1.1h-2.3zM838.0,489.3l1.8,1.8l-0.8,0.8l-1.8,-1.8zM1078.0,477.1h1.3v1.3h-1.3zM911.0,507.9h2.3v1.1h-2.3zM916.4,505.8h2.3v1.1h-2.3zM705.4,521.1l1.8,1.8l-0.8,0.8l-1.8,-1.8zM1180.6,439.9h2.3v1.1h-2.3zM1076.8,449.7h2.3v1.1h-2.3zM951.4,530.6h2.3v1.1h-2.3zM761.2,522.7h1.3v1.3h-1.3zM822.3,488.0l1.8,1.8l-0.8,0.8l-1.8,-1.8zM725.8,528.4h2.3v1.1h-2.3zM747.9,533.1h2.3v1.1h-2.3zM760.8,520.4h2.3v1.1h-2.3zM674.5,522.6h1.3v1.3h-1.3zM842.7,532.4l1.8,1.8l-0.8,0.8l-1.8,-1.8zM810.2,476.4h2.3v1.1h-2.3zM856.4,477.9h2.3v1.1h-2.3zM789.6,539.5h2.3v1.1h-2.3zM1006.6,536.9l1.8,1.8l-0.8,0.8l-1.8,-1.8zM798.8,540.7l1.8,1.8l-0.8,0.8l-1.8,-1.8zM803.5,510.1h2.3v1.1h-2.3zM1064.2,512.5h1.3v1.3h-1.3zM694.5,534.9h1.3v1.3h-1.3zM911.0,473.4l1.8,1.8l-0.8,0.8l-1.8,-1.8zM1092.0,460.3h2.3v1.1h-2.3zM704.9,520.0h2.3v1.1h-2.3zM914.4,480.6l1.8,1.8l-0.8,0.8l-1.8,-1.8zM1004.8,537.8h1.3v1.3h-1.3zM834.4,535.4h1.3v1.3h-1.3zM944.3,490.1h2.3v1.1h-2.3zM779.4,476.0h2.3v1.1h-2.3zM687.5,502.5h1.3v1.3h-1.3zM1050.0,483.8h2.3v1.1h-2.3zM947.1,529.2l1.8,1.8l-0.8,0.8l-1.8,-1.8zM899.2,478.1l1.8,1.8l-0.8,0.8l-1.8,-1.8zM1162.7,457.4h2.3v1.1h-2.3zM843.7,518.9h2.3v1.1h-2.3zM966.9,526.2h2.3v1.1h-2.3zM861.1,541.2h2.3v1.1h-2.3zM940.2,542.2h1.3v1.3h-1.3zM745.3,507.2l1.8,1.8l-0.8,0.8l-1.8,-1.8zM894.1,503.8h2.3v1.1h-2.3zM815.6,482.8h1.3v1.3h-1.3zM1049.7,520.8h2.3v1.1h-2.3zM804.7,493.9h2.3v1.1h-2.3zM989.2,538.9h2.3v1.1h-2.3zM979.9,517.6l1.8,1.8l-0.8,0.8l-1.8,-1.8zM1047.1,516.4h2.3v1.1h-2.3zM706.0,526.4l1.8,1.8l-0.8,0.8l-1.8,-1.8zM744.5,487.4h1.3v1.3h-1.3zM1076.1,462.4h2.3v1.1h-2.3zM754.6,481.6h1.3v1.3h-1.3zM927.2,543.6h1.3v1.3h-1.3zM774.1,502.7h2.3v1.1h-2.3zM1041.4,546.2h2.3v1.1h-2.3zM857.0,483.3h2.3v1.1h-2.3zM749.9,534.3h1.3v1.3h-1.3zM672.4,532.5l1.8,1.8l-0.8,0.8l-1.8,-1.8zM882.3,484.2h2.3v1.1h-2.3zM963.3,510.9l1.8,1.8l-0.8,0.8l-1.8,-1.8zM863.3,532.8l1.8,1.8l-0.8,0.8l-1.8,-1.8zM982.3,512.6h2.3v1.1h-2.3zM730.3,538.1l1.8,1.8l-0.8,0.8l-1.8,-1.8zM923.7,491.5h2.3v1.1h-2.3zM951.5,541.8h1.3v1.3h-1.3zM922.2,472.6h2.3v1.1h-2.3zM992.5,525.2h2.3v1.1h-2.3zM865.7,479.0h2.3v1.1h-2.3zM1105.2,452.6l1.8,1.8l-0.8,0.8l-1.8,-1.8zM700.6,527.4h2.3v1.1h-2.3zM809.1,519.1l1.8,1.8l-0.8,0.8l-1.8,-1.8zM961.5,540.9h2.3v1.1h-2.3zM986.0,547.3h2.3v1.1h-2.3zM680.6,516.2h1.3v1.3h-1.3zM765.1,504.7l1.8,1.8l-0.8,0.8l-1.8,-1.8zM950.5,513.0h2.3v1.1h-2.3zM902.4,525.7h1.3v1.3h-1.3zM908.8,536.2h1.3v1.3h-1.3zM761.9,478.5l1.8,1.8l-0.8,0.8l-1.8,-1.8zM671.4,527.0l1.8,1.8l-0.8,0.8l-1.8,-1.8zM838.0,521.9h2.3v1.1h-2.3zM815.1,541.1h2.3v1.1h-2.3zM748.2,522.3h1.3v1.3h-1.3zM895.9,542.3h2.3v1.1h-2.3zM1054.7,463.8l1.8,1.8l-0.8,0.8l-1.8,-1.8zM931.2,517.7h2.3v1.1h-2.3zM972.6,527.8l1.8,1.8l-0.8,0.8l-1.8,-1.8zM911.3,534.2h2.3v1.1h-2.3zM732.0,520.9h2.3v1.1h-2.3zM801.3,528.5h2.3v1.1h-2.3zM687.3,487.9h1.3v1.3h-1.3zM1050.6,518.6h2.3v1.1h-2.3zM1164.3,455.5h2.3v1.1h-2.3zM767.7,492.0h2.3v1.1h-2.3zM920.6,525.2h2.3v1.1h-2.3zM994.4,546.6l1.8,1.8l-0.8,0.8l-1.8,-1.8zM1064.4,460.9h1.3v1.3h-1.3zM741.8,488.6h1.3v1.3h-1.3zM811.2,476.6h1.3v1.3h-1.3zM1073.6,502.4h2.3v1.1h-2.3zM873.5,497.5h2.3v1.1h-2.3zM860.3,504.2h2.3v1.1h-2.3zM1185.6,441.5h2.3v1.1h-2.3zM1029.1,516.7h2.3v1.1h-2.3zM835.2,499.9h2.3v1.1h-2.3zM889.8,538.7h1.3v1.3h-1.3zM727.7,520.6h2.3v1.1h-2.3zM747.5,476.3h1.3v1.3h-1.3zM1054.5,497.9h2.3v1.1h-2.3zM1146.9,463.6h2.3v1.1h-2.3zM981.5,526.9h2.3v1.1h-2.3zM936.0,500.6h1.3v1.3h-1.3zM888.1,497.1h2.3v1.1h-2.3zM699.8,483.0h2.3v1.1h-2.3zM922.5,479.0h2.3v1.1h-2.3zM1075.3,459.8l1.8,1.8l-0.8,0.8l-1.8,-1.8zM936.1,541.1h1.3v1.3h-1.3zM716.2,509.3h1.3v1.3h-1.3zM752.1,506.5h2.3v1.1h-2.3zM938.2,472.9h2.3v1.1h-2.3zM787.3,480.2h2.3v1.1h-2.3zM881.8,513.9h1.3v1.3h-1.3zM935.7,490.7h2.3v1.1h-2.3zM744.0,490.1h2.3v1.1h-2.3zM1033.1,514.9h1.3v1.3h-1.3zM1187.4,439.2l1.8,1.8l-0.8,0.8l-1.8,-1.8zM978.6,517.9h2.3v1.1h-2.3zM730.2,478.1l1.8,1.8l-0.8,0.8l-1.8,-1.8zM838.0,539.4l1.8,1.8l-0.8,0.8l-1.8,-1.8zM773.4,494.2h1.3v1.3h-1.3zM848.2,477.3h1.3v1.3h-1.3zM816.3,492.3h1.3v1.3h-1.3zM891.4,511.0h2.3v1.1h-2.3zM801.2,541.4h1.3v1.3h-1.3zM882.5,516.2l1.8,1.8l-0.8,0.8l-1.8,-1.8zM925.2,518.8h2.3v1.1h-2.3zM909.0,475.5h2.3v1.1h-2.3zM859.9,521.5l1.8,1.8l-0.8,0.8l-1.8,-1.8zM1028.0,507.7l1.8,1.8l-0.8,0.8l-1.8,-1.8zM1024.9,546.1l1.8,1.8l-0.8,0.8l-1.8,-1.8zM726.6,526.3l1.8,1.8l-0.8,0.8l-1.8,-1.8zM927.9,476.8h2.3v1.1h-2.3zM902.2,482.9h2.3v1.1h-2.3zM1079.3,477.5h2.3v1.1h-2.3zM880.1,503.1h2.3v1.1h-2.3zM679.7,479.2h2.3v1.1h-2.3zM674.9,477.1l1.8,1.8l-0.8,0.8l-1.8,-1.8zM845.8,512.8h1.3v1.3h-1.3zM1027.1,504.9h2.3v1.1h-2.3zM792.9,502.0h1.3v1.3h-1.3zM841.8,508.8h1.3v1.3h-1.3zM796.6,533.4h2.3v1.1h-2.3zM689.2,526.4l1.8,1.8l-0.8,0.8l-1.8,-1.8zM811.9,524.0h1.3v1.3h-1.3zM1193.1,440.3h2.3v1.1h-2.3zM790.0,506.5l1.8,1.8l-0.8,0.8l-1.8,-1.8zM874.6,526.8h2.3v1.1h-2.3zM807.1,521.3h1.3v1.3h-1.3zM717.3,476.8h1.3v1.3h-1.3zM940.1,491.3h2.3v1.1h-2.3zM729.7,510.2h1.3v1.3h-1.3zM860.6,480.6h2.3v1.1h-2.3zM1020.8,511.1h1.3v1.3h-1.3zM1031.3,512.4h1.3v1.3h-1.3zM760.9,508.8l1.8,1.8l-0.8,0.8l-1.8,-1.8zM806.4,508.8h2.3v1.1h-2.3zM925.7,505.5h2.3v1.1h-2.3zM832.9,512.7h1.3v1.3h-1.3zM996.5,524.5h1.3v1.3h-1.3zM969.9,521.4h2.3v1.1h-2.3zM725.5,505.0h2.3v1.1h-2.3zM763.1,530.0h1.3v1.3h-1.3zM677.4,537.3h1.3v1.3h-1.3zM951.9,534.0h2.3v1.1h-2.3zM902.7,526.3h2.3v1.1h-2.3zM1057.8,460.4h2.3v1.1h-2.3zM994.2,534.0h2.3v1.1h-2.3zM800.6,514.6h2.3v1.1h-2.3zM939.7,492.1h2.3v1.1h-2.3zM1057.8,510.3h2.3v1.1h-2.3zM938.1,525.3h2.3v1.1h-2.3zM1052.6,475.0l1.8,1.8l-0.8,0.8l-1.8,-1.8zM869.1,501.1h2.3v1.1h-2.3zM962.2,503.8h1.3v1.3h-1.3zM735.6,524.2h2.3v1.1h-2.3zM1029.1,528.6h1.3v1.3h-1.3zM1026.5,544.5h2.3v1.1h-2.3zM722.5,481.8h1.3v1.3h-1.3zM921.2,496.4h1.3v1.3h-1.3zM936.5,531.1h2.3v1.1h-2.3zM1162.8,457.1h2.3v1.1h-2.3zM1083.8,469.5l1.8,1.8l-0.8,0.8l-1.8,-1.8zM790.2,500.4h1.3v1.3h-1.3zM866.3,489.7h2.3v1.1h-2.3zM1010.6,514.2h2.3v1.1h-2.3zM961.4,519.0h2.3v1.1h-2.3zM714.8,490.8h2.3v1.1h-2.3zM828.4,487.5h2.3v1.1h-2.3zM726.4,514.9l1.8,1.8l-0.8,0.8l-1.8,-1.8zM688.5,521.8h2.3v1.1h-2.3zM903.0,484.7l1.8,1.8l-0.8,0.8l-1.8,-1.8zM885.5,510.7h1.3v1.3h-1.3zM914.0,500.7h2.3v1.1h-2.3zM965.0,534.3h2.3v1.1h-2.3zM676.1,506.7h1.3v1.3h-1.3zM1047.4,518.5h2.3v1.1h-2.3zM1010.2,510.2h1.3v1.3h-1.3zM680.6,485.2h2.3v1.1h-2.3zM737.1,511.8h2.3v1.1h-2.3zM1088.8,469.5h1.3v1.3h-1.3zM1053.5,476.8h2.3v1.1h-2.3zM878.7,492.2h2.3v1.1h-2.3zM734.0,494.6h2.3v1.1h-2.3zM1012.2,530.6h2.3v1.1h-2.3zM1070.1,466.3h2.3v1.1h-2.3zM776.8,485.1l1.8,1.8l-0.8,0.8l-1.8,-1.8zM1145.5,461.6h1.3v1.3h-1.3zM904.9,540.2h2.3v1.1h-2.3zM980.2,516.4h2.3v1.1h-2.3zM829.1,517.0h2.3v1.1h-2.3zM772.3,494.0h2.3v1.1h-2.3zM986.3,534.1h2.3v1.1h-2.3zM703.0,514.5h1.3v1.3h-1.3zM1051.9,466.2h1.3v1.3h-1.3zM768.1,484.7h2.3v1.1h-2.3zM814.9,508.5h2.3v1.1h-2.3zM939.2,492.5l1.8,1.8l-0.8,0.8l-1.8,-1.8zM1169.9,463.8l1.8,1.8l-0.8,0.8l-1.8,-1.8zM711.2,534.1h2.3v1.1h-2.3zM806.6,505.5h2.3v1.1h-2.3zM914.6,516.8h2.3v1.1h-2.3zM921.6,509.3l1.8,1.8l-0.8,0.8l-1.8,-1.8zM894.6,477.5l1.8,1.8l-0.8,0.8l-1.8,-1.8zM1062.2,509.4h2.3v1.1h-2.3zM1114.6,461.9l1.8,1.8l-0.8,0.8l-1.8,-1.8zM811.1,525.3h1.3v1.3h-1.3zM834.9,476.7l1.8,1.8l-0.8,0.8l-1.8,-1.8zM751.7,499.9h2.3v1.1h-2.3zM751.2,517.2h2.3v1.1h-2.3zM900.3,478.1h2.3v1.1h-2.3zM1045.9,501.5h1.3v1.3h-1.3zM735.2,532.4h2.3v1.1h-2.3zM1046.5,527.9l1.8,1.8l-0.8,0.8l-1.8,-1.8zM960.9,528.3h2.3v1.1h-2.3zM987.2,540.9l1.8,1.8l-0.8,0.8l-1.8,-1.8zM1044.1,542.0h1.3v1.3h-1.3zM1020.8,542.7l1.8,1.8l-0.8,0.8l-1.8,-1.8zM905.5,487.6l1.8,1.8l-0.8,0.8l-1.8,-1.8zM998.0,527.8h2.3v1.1h-2.3zM1032.0,537.5h2.3v1.1h-2.3zM741.1,491.2h2.3v1.1h-2.3zM905.6,526.0h1.3v1.3h-1.3zM888.6,532.6l1.8,1.8l-0.8,0.8l-1.8,-1.8zM830.9,491.0h2.3v1.1h-2.3zM675.7,478.5h2.3v1.1h-2.3zM930.2,480.9h2.3v1.1h-2.3zM1144.3,462.7h1.3v1.3h-1.3zM969.9,540.0h1.3v1.3h-1.3zM1195.9,437.4h1.3v1.3h-1.3zM1043.3,543.8h2.3v1.1h-2.3zM839.1,535.7h2.3v1.1h-2.3zM1013.2,526.8h2.3v1.1h-2.3zM980.5,544.7l1.8,1.8l-0.8,0.8l-1.8,-1.8zM1174.4,462.7h1.3v1.3h-1.3zM873.8,474.1l1.8,1.8l-0.8,0.8l-1.8,-1.8zM761.9,498.8l1.8,1.8l-0.8,0.8l-1.8,-1.8zM755.6,531.5h2.3v1.1h-2.3zM959.9,541.6h2.3v1.1h-2.3zM733.7,527.0h1.3v1.3h-1.3zM1099.3,460.6h2.3v1.1h-2.3zM720.8,522.9l1.8,1.8l-0.8,0.8l-1.8,-1.8zM835.5,513.3l1.8,1.8l-0.8,0.8l-1.8,-1.8zM797.7,514.9l1.8,1.8l-0.8,0.8l-1.8,-1.8zM733.7,524.3l1.8,1.8l-0.8,0.8l-1.8,-1.8zM818.7,523.5h1.3v1.3h-1.3zM1101.9,452.5h2.3v1.1h-2.3zM854.3,536.1h2.3v1.1h-2.3zM708.0,521.3h2.3v1.1h-2.3zM886.3,486.2h2.3v1.1h-2.3zM818.8,519.7h2.3v1.1h-2.3zM970.0,534.1h2.3v1.1h-2.3zM935.6,523.1h2.3v1.1h-2.3zM734.6,507.8l1.8,1.8l-0.8,0.8l-1.8,-1.8zM832.4,493.7h2.3v1.1h-2.3zM922.8,545.9h2.3v1.1h-2.3zM1109.0,458.8l1.8,1.8l-0.8,0.8l-1.8,-1.8zM917.7,481.7h2.3v1.1h-2.3zM786.5,477.5h2.3v1.1h-2.3zM944.5,501.7h1.3v1.3h-1.3zM855.4,482.5h2.3v1.1h-2.3zM794.5,524.5h1.3v1.3h-1.3zM954.4,495.8h2.3v1.1h-2.3zM704.1,511.4l1.8,1.8l-0.8,0.8l-1.8,-1.8zM871.0,540.6l1.8,1.8l-0.8,0.8l-1.8,-1.8zM962.8,509.9h2.3v1.1h-2.3zM692.3,490.5h2.3v1.1h-2.3zM1060.2,506.6h2.3v1.1h-2.3zM1048.9,474.3l1.8,1.8l-0.8,0.8l-1.8,-1.8zM985.4,509.9h2.3v1.1h-2.3zM951.7,508.1h2.3v1.1h-2.3zM905.1,534.8l1.8,1.8l-0.8,0.8l-1.8,-1.8zM1050.7,469.0h2.3v1.1h-2.3zM1043.0,468.6l1.8,1.8l-0.8,0.8l-1.8,-1.8zM854.8,522.2h1.3v1.3h-1.3zM674.3,535.8h2.3v1.1h-2.3zM1077.8,470.5h2.3v1.1h-2.3zM1070.2,490.8h2.3v1.1h-2.3zM1078.5,459.3h1.3v1.3h-1.3zM1022.4,522.6h1.3v1.3h-1.3zM904.4,519.0h1.3v1.3h-1.3zM778.4,496.1h1.3v1.3h-1.3zM1056.0,456.9h2.3v1.1h-2.3zM854.0,518.6h1.3v1.3h-1.3zM760.8,518.9h2.3v1.1h-2.3zM1067.9,451.1h2.3v1.1h-2.3zM802.7,493.7h2.3v1.1h-2.3zM819.5,521.0l1.8,1.8l-0.8,0.8l-1.8,-1.8zM897.5,538.2h2.3v1.1h-2.3zM1112.8,469.8h2.3v1.1h-2.3zM1146.7,465.6h2.3v1.1h-2.3zM731.0,476.6h2.3v1.1h-2.3zM831.0,495.0l1.8,1.8l-0.8,0.8l-1.8,-1.8zM740.2,536.7h1.3v1.3h-1.3zM1041.0,461.6h1.3v1.3h-1.3zM933.6,511.2h2.3v1.1h-2.3zM748.1,495.3h2.3v1.1h-2.3zM999.8,533.9h2.3v1.1h-2.3zM784.5,522.7h1.3v1.3h-1.3zM1142.1,457.2h1.3v1.3h-1.3zM1066.9,503.7h2.3v1.1h-2.3zM1177.9,445.9l1.8,1.8l-0.8,0.8l-1.8,-1.8zM1053.0,470.8l1.8,1.8l-0.8,0.8l-1.8,-1.8zM887.0,521.1h2.3v1.1h-2.3zM1100.4,468.9h1.3v1.3h-1.3zM682.4,490.8h2.3v1.1h-2.3zM712.8,515.7l1.8,1.8l-0.8,0.8l-1.8,-1.8zM985.0,528.5h2.3v1.1h-2.3zM1061.8,458.3h2.3v1.1h-2.3zM888.5,543.8h2.3v1.1h-2.3zM941.0,527.0h2.3v1.1h-2.3zM913.1,509.1h1.3v1.3h-1.3zM734.8,482.5h2.3v1.1h-2.3zM1056.5,522.0h2.3v1.1h-2.3zM1056.2,457.9h1.3v1.3h-1.3zM985.1,524.0h2.3v1.1h-2.3zM851.7,529.6l1.8,1.8l-0.8,0.8l-1.8,-1.8zM1188.3,447.7h2.3v1.1h-2.3zM725.6,518.0l1.8,1.8l-0.8,0.8l-1.8,-1.8zM1013.1,524.4h1.3v1.3h-1.3zM967.6,540.8h1.3v1.3h-1.3zM1017.3,502.3h1.3v1.3h-1.3zM1070.9,500.4h2.3v1.1h-2.3zM895.1,482.9h1.3v1.3h-1.3zM876.7,483.5h2.3v1.1h-2.3zM1185.1,444.5h2.3v1.1h-2.3zM1052.1,479.8h1.3v1.3h-1.3zM820.8,488.0h2.3v1.1h-2.3zM1039.7,526.4h1.3v1.3h-1.3zM1048.8,487.3h2.3v1.1h-2.3zM701.1,518.9h2.3v1.1h-2.3zM801.5,541.7l1.8,1.8l-0.8,0.8l-1.8,-1.8zM850.9,500.5h2.3v1.1h-2.3zM902.4,528.4h2.3v1.1h-2.3zM886.9,506.3h1.3v1.3h-1.3zM735.0,499.0h2.3v1.1h-2.3zM1084.4,452.1h2.3v1.1h-2.3zM901.9,539.3h2.3v1.1h-2.3zM878.8,522.1h2.3v1.1h-2.3zM921.3,480.0l1.8,1.8l-0.8,0.8l-1.8,-1.8zM948.0,513.1h2.3v1.1h-2.3zM670.3,516.4h1.3v1.3h-1.3zM781.4,529.5h1.3v1.3h-1.3zM852.9,525.7l1.8,1.8l-0.8,0.8l-1.8,-1.8zM1039.7,536.7h1.3v1.3h-1.3zM949.5,529.4h1.3v1.3h-1.3zM1141.0,468.5h2.3v1.1h-2.3zM1010.4,513.1h2.3v1.1h-2.3zM1191.9,439.0h1.3v1.3h-1.3zM900.5,542.0h2.3v1.1h-2.3zM756.4,507.0h1.3v1.3h-1.3zM941.8,489.3h1.3v1.3h-1.3zM988.8,524.7h2.3v1.1h-2.3zM825.3,532.7l1.8,1.8l-0.8,0.8l-1.8,-1.8zM726.6,513.6l1.8,1.8l-0.8,0.8l-1.8,-1.8zM873.5,498.0h1.3v1.3h-1.3zM883.4,526.8h2.3v1.1h-2.3zM953.5,525.4h1.3v1.3h-1.3zM720.7,535.5h2.3v1.1h-2.3zM885.4,496.4h2.3v1.1h-2.3zM1043.8,526.3l1.8,1.8l-0.8,0.8l-1.8,-1.8zM1136.8,470.8h2.3v1.1h-2.3zM866.3,473.8h2.3v1.1h-2.3zM839.6,493.5l1.8,1.8l-0.8,0.8l-1.8,-1.8zM814.4,536.7l1.8,1.8l-0.8,0.8l-1.8,-1.8zM689.8,528.0h1.3v1.3h-1.3zM886.8,498.6h2.3v1.1h-2.3zM742.7,512.0h1.3v1.3h-1.3zM1082.6,451.7h1.3v1.3h-1.3zM1078.1,452.1h1.3v1.3h-1.3zM880.3,489.6h2.3v1.1h-2.3zM1057.6,490.5l1.8,1.8l-0.8,0.8l-1.8,-1.8zM862.2,536.3l1.8,1.8l-0.8,0.8l-1.8,-1.8zM908.3,499.3l1.8,1.8l-0.8,0.8l-1.8,-1.8zM950.0,545.4h2.3v1.1h-2.3zM928.9,532.6h2.3v1.1h-2.3zM807.6,485.9h2.3v1.1h-2.3zM832.8,503.9h2.3v1.1h-2.3zM699.0,495.3h2.3v1.1h-2.3zM1059.2,513.9l1.8,1.8l-0.8,0.8l-1.8,-1.8zM919.2,487.8h2.3v1.1h-2.3zM690.3,488.1h1.3v1.3h-1.3zM856.6,474.5h1.3v1.3h-1.3zM728.6,531.9h2.3v1.1h-2.3zM1151.5,472.2h2.3v1.1h-2.3zM982.0,529.8h2.3v1.1h-2.3zM953.0,545.0h2.3v1.1h-2.3zM809.1,499.0h2.3v1.1h-2.3zM804.2,476.6h1.3v1.3h-1.3zM794.6,516.2h1.3v1.3h-1.3zM707.0,514.8h2.3v1.1h-2.3zM774.7,533.6h2.3v1.1h-2.3zM954.2,500.7h2.3v1.1h-2.3zM767.3,481.7h1.3v1.3h-1.3zM718.1,516.7h2.3v1.1h-2.3zM1137.1,454.2h2.3v1.1h-2.3zM1069.5,503.5h2.3v1.1h-2.3zM678.8,484.1h2.3v1.1h-2.3zM981.2,547.8h2.3v1.1h-2.3zM708.8,514.6h2.3v1.1h-2.3zM882.6,515.2h2.3v1.1h-2.3zM1091.9,455.4h2.3v1.1h-2.3zM1065.3,511.7h2.3v1.1h-2.3zM737.1,505.0l1.8,1.8l-0.8,0.8l-1.8,-1.8zM920.0,488.8l1.8,1.8l-0.8,0.8l-1.8,-1.8zM767.8,487.8h1.3v1.3h-1.3zM787.3,507.1l1.8,1.8l-0.8,0.8l-1.8,-1.8zM876.9,542.9h1.3v1.3h-1.3zM1015.3,534.5h2.3v1.1h-2.3zM922.0,520.4h1.3v1.3h-1.3zM688.4,484.1h2.3v1.1h-2.3zM948.3,507.4h2.3v1.1h-2.3zM808.7,524.5h2.3v1.1h-2.3zM992.7,527.8h2.3v1.1h-2.3zM1082.8,479.3h1.3v1.3h-1.3zM1059.7,515.2h2.3v1.1h-2.3zM687.7,530.4l1.8,1.8l-0.8,0.8l-1.8,-1.8zM810.8,540.8h1.3v1.3h-1.3zM1054.4,527.9l1.8,1.8l-0.8,0.8l-1.8,-1.8zM1180.6,443.5l1.8,1.8l-0.8,0.8l-1.8,-1.8zM701.0,484.4h2.3v1.1h-2.3zM1076.4,473.0h2.3v1.1h-2.3zM1060.5,500.5h2.3v1.1h-2.3zM1049.6,518.8h1.3v1.3h-1.3zM1164.2,454.0h2.3v1.1h-2.3zM829.5,496.6h1.3v1.3h-1.3zM1007.5,501.9l1.8,1.8l-0.8,0.8l-1.8,-1.8zM787.0,510.3h2.3v1.1h-2.3zM679.6,491.3h2.3v1.1h-2.3zM806.5,478.3h2.3v1.1h-2.3zM889.1,475.7h2.3v1.1h-2.3zM679.2,531.1l1.8,1.8l-0.8,0.8l-1.8,-1.8zM792.9,538.5h1.3v1.3h-1.3zM733.9,492.1h1.3v1.3h-1.3zM997.3,512.1h1.3v1.3h-1.3zM1077.5,453.9h2.3v1.1h-2.3zM775.4,533.8l1.8,1.8l-0.8,0.8l-1.8,-1.8zM1166.0,464.2h1.3v1.3h-1.3zM1092.0,455.4h2.3v1.1h-2.3zM816.6,508.3h1.3v1.3h-1.3zM947.6,533.0l1.8,1.8l-0.8,0.8l-1.8,-1.8zM780.4,496.0h2.3v1.1h-2.3zM969.5,503.7h2.3v1.1h-2.3zM1079.4,461.9h1.3v1.3h-1.3zM955.0,517.2h1.3v1.3h-1.3zM1072.6,459.1h1.3v1.3h-1.3zM1084.0,459.7l1.8,1.8l-0.8,0.8l-1.8,-1.8zM928.8,483.5l1.8,1.8l-0.8,0.8l-1.8,-1.8zM809.1,511.6h1.3v1.3h-1.3zM918.6,495.8h2.3v1.1h-2.3zM724.9,490.1h2.3v1.1h-2.3zM760.2,485.5h2.3v1.1h-2.3zM934.5,495.5h2.3v1.1h-2.3zM966.0,546.5h2.3v1.1h-2.3zM1063.3,491.2l1.8,1.8l-0.8,0.8l-1.8,-1.8zM778.5,476.8h2.3v1.1h-2.3zM1064.6,477.4h1.3v1.3h-1.3zM819.6,540.5h2.3v1.1h-2.3zM815.3,537.7h2.3v1.1h-2.3zM889.0,524.8l1.8,1.8l-0.8,0.8l-1.8,-1.8zM756.1,535.5h1.3v1.3h-1.3zM1127.3,451.5h1.3v1.3h-1.3zM808.9,540.9l1.8,1.8l-0.8,0.8l-1.8,-1.8zM695.7,535.1h2.3v1.1h-2.3zM941.0,501.6h1.3v1.3h-1.3zM1050.3,496.4h2.3v1.1h-2.3zM705.6,479.1h1.3v1.3h-1.3zM724.6,486.9h1.3v1.3h-1.3zM1086.2,455.6h2.3v1.1h-2.3zM1191.9,435.4h1.3v1.3h-1.3zM719.4,521.1h1.3v1.3h-1.3zM857.4,517.1h2.3v1.1h-2.3zM942.9,496.6h2.3v1.1h-2.3zM842.9,530.3l1.8,1.8l-0.8,0.8l-1.8,-1.8zM809.3,534.5h2.3v1.1h-2.3zM967.6,504.6h2.3v1.1h-2.3zM991.1,505.2l1.8,1.8l-0.8,0.8l-1.8,-1.8zM787.2,509.8h2.3v1.1h-2.3zM969.3,533.2h2.3v1.1h-2.3zM920.3,516.7h2.3v1.1h-2.3zM987.1,529.2h1.3v1.3h-1.3zM804.9,493.2h1.3v1.3h-1.3zM787.6,522.7h1.3v1.3h-1.3zM1167.2,462.8h2.3v1.1h-2.3zM847.9,485.2l1.8,1.8l-0.8,0.8l-1.8,-1.8zM754.1,476.3l1.8,1.8l-0.8,0.8l-1.8,-1.8zM1030.5,501.9h2.3v1.1h-2.3zM685.7,508.2h1.3v1.3h-1.3zM915.5,542.7h1.3v1.3h-1.3zM774.0,506.3h1.3v1.3h-1.3zM921.6,541.5l1.8,1.8l-0.8,0.8l-1.8,-1.8zM1041.1,503.2h1.3v1.3h-1.3zM908.9,530.9h1.3v1.3h-1.3zM915.1,528.0h2.3v1.1h-2.3zM745.4,534.4l1.8,1.8l-0.8,0.8l-1.8,-1.8zM964.9,544.7h1.3v1.3h-1.3zM712.2,515.7h2.3v1.1h-2.3zM842.4,510.8l1.8,1.8l-0.8,0.8l-1.8,-1.8zM892.2,516.9h2.3v1.1h-2.3zM752.8,490.1h1.3v1.3h-1.3zM1078.9,469.5h2.3v1.1h-2.3zM927.2,534.9l1.8,1.8l-0.8,0.8l-1.8,-1.8zM694.5,515.6h1.3v1.3h-1.3zM925.1,511.1h1.3v1.3h-1.3zM766.2,514.7h2.3v1.1h-2.3zM833.5,532.8h1.3v1.3h-1.3zM940.4,516.4h1.3v1.3h-1.3zM872.9,498.1h2.3v1.1h-2.3zM1123.1,466.8l1.8,1.8l-0.8,0.8l-1.8,-1.8zM1014.7,504.2l1.8,1.8l-0.8,0.8l-1.8,-1.8zM811.0,530.8h1.3v1.3h-1.3zM804.2,481.6h2.3v1.1h-2.3zM709.9,535.6l1.8,1.8l-0.8,0.8l-1.8,-1.8zM787.4,511.7h2.3v1.1h-2.3zM935.3,545.0l1.8,1.8l-0.8,0.8l-1.8,-1.8zM894.8,504.6h1.3v1.3h-1.3zM709.3,538.2h2.3v1.1h-2.3zM772.6,507.7h2.3v1.1h-2.3zM967.0,519.7h2.3v1.1h-2.3zM959.7,529.6l1.8,1.8l-0.8,0.8l-1.8,-1.8zM1003.0,511.6h2.3v1.1h-2.3zM875.2,533.2h1.3v1.3h-1.3zM913.3,545.0h2.3v1.1h-2.3zM948.0,489.5h2.3v1.1h-2.3zM746.7,492.8l1.8,1.8l-0.8,0.8l-1.8,-1.8zM807.2,482.9l1.8,1.8l-0.8,0.8l-1.8,-1.8zM900.1,482.5h2.3v1.1h-2.3zM1175.1,456.1h2.3v1.1h-2.3zM1161.4,468.8h1.3v1.3h-1.3zM837.6,495.9h2.3v1.1h-2.3zM1045.0,467.8h1.3v1.3h-1.3zM964.8,517.3h1.3v1.3h-1.3zM1151.2,461.1h2.3v1.1h-2.3zM802.4,528.0l1.8,1.8l-0.8,0.8l-1.8,-1.8zM896.6,504.5h1.3v1.3h-1.3zM862.6,543.7h2.3v1.1h-2.3zM867.1,477.2h1.3v1.3h-1.3zM737.3,513.7h1.3v1.3h-1.3zM733.7,535.0h1.3v1.3h-1.3zM1134.2,468.1h1.3v1.3h-1.3zM816.0,530.4h2.3v1.1h-2.3zM927.4,494.7l1.8,1.8l-0.8,0.8l-1.8,-1.8zM831.2,527.1h2.3v1.1h-2.3zM712.6,516.2h1.3v1.3h-1.3zM876.7,498.6h1.3v1.3h-1.3zM1059.5,452.9h1.3v1.3h-1.3zM756.2,509.8h1.3v1.3h-1.3zM784.1,481.1h2.3v1.1h-2.3zM1041.6,454.1l1.8,1.8l-0.8,0.8l-1.8,-1.8zM825.8,513.2h2.3v1.1h-2.3zM910.3,479.8l1.8,1.8l-0.8,0.8l-1.8,-1.8zM676.1,487.9h2.3v1.1h-2.3zM1137.4,460.1h2.3v1.1h-2.3zM886.9,503.2h1.3v1.3h-1.3zM887.7,514.0h2.3v1.1h-2.3zM1036.6,541.7l1.8,1.8l-0.8,0.8l-1.8,-1.8zM766.4,520.9l1.8,1.8l-0.8,0.8l-1.8,-1.8zM923.9,533.6h2.3v1.1h-2.3zM847.2,493.6l1.8,1.8l-0.8,0.8l-1.8,-1.8zM925.5,515.9h2.3v1.1h-2.3zM831.7,538.9h1.3v1.3h-1.3zM792.8,503.3h2.3v1.1h-2.3zM945.1,509.2h2.3v1.1h-2.3zM767.5,515.6l1.8,1.8l-0.8,0.8l-1.8,-1.8zM702.2,482.4h2.3v1.1h-2.3zM917.2,535.2h1.3v1.3h-1.3zM816.4,505.8h2.3v1.1h-2.3zM920.8,495.5h1.3v1.3h-1.3zM758.4,531.2h2.3v1.1h-2.3zM1073.6,452.7l1.8,1.8l-0.8,0.8l-1.8,-1.8zM919.2,474.1l1.8,1.8l-0.8,0.8l-1.8,-1.8zM773.1,505.2h2.3v1.1h-2.3zM1052.1,501.8h2.3v1.1h-2.3zM828.7,521.2h2.3v1.1h-2.3zM1048.5,472.2h1.3v1.3h-1.3zM922.2,520.9h2.3v1.1h-2.3zM811.8,498.3h2.3v1.1h-2.3zM728.8,494.2h1.3v1.3h-1.3zM1113.4,462.8l1.8,1.8l-0.8,0.8l-1.8,-1.8zM973.4,519.3l1.8,1.8l-0.8,0.8l-1.8,-1.8zM881.5,491.9h1.3v1.3h-1.3zM1039.3,513.9h1.3v1.3h-1.3zM973.3,511.3h2.3v1.1h-2.3zM778.2,488.2h2.3v1.1h-2.3zM804.4,529.6h2.3v1.1h-2.3zM958.1,513.0h2.3v1.1h-2.3zM725.1,529.6h2.3v1.1h-2.3zM770.8,516.4h2.3v1.1h-2.3zM977.4,514.1h2.3v1.1h-2.3zM1061.9,499.3h2.3v1.1h-2.3zM796.8,489.1h2.3v1.1h-2.3zM692.8,486.2h2.3v1.1h-2.3zM1015.2,536.4l1.8,1.8l-0.8,0.8l-1.8,-1.8zM726.0,503.4l1.8,1.8l-0.8,0.8l-1.8,-1.8zM702.2,489.5h2.3v1.1h-2.3zM911.1,496.4h1.3v1.3h-1.3zM1141.8,466.7h2.3v1.1h-2.3zM803.7,488.9l1.8,1.8l-0.8,0.8l-1.8,-1.8zM786.5,540.2l1.8,1.8l-0.8,0.8l-1.8,-1.8zM1022.7,512.0h2.3v1.1h-2.3zM1036.0,506.1h2.3v1.1h-2.3zM942.5,502.5h1.3v1.3h-1.3zM1070.1,495.8h2.3v1.1h-2.3zM1051.0,458.3h1.3v1.3h-1.3zM913.3,493.1l1.8,1.8l-0.8,0.8l-1.8,-1.8zM835.5,475.1h1.3v1.3h-1.3zM1058.8,477.1l1.8,1.8l-0.8,0.8l-1.8,-1.8zM1003.1,545.2h2.3v1.1h-2.3zM855.0,487.8l1.8,1.8l-0.8,0.8l-1.8,-1.8zM1075.9,454.4h2.3v1.1h-2.3zM800.1,513.6h2.3v1.1h-2.3zM681.7,531.2l1.8,1.8l-0.8,0.8l-1.8,-1.8zM1135.4,468.1h2.3v1.1h-2.3zM745.9,502.6h2.3v1.1h-2.3zM689.9,498.0h2.3v1.1h-2.3zM871.5,527.4h2.3v1.1h-2.3zM1093.0,473.0h2.3v1.1h-2.3zM721.5,517.9h1.3v1.3h-1.3zM1074.6,457.1h2.3v1.1h-2.3zM781.3,532.7l1.8,1.8l-0.8,0.8l-1.8,-1.8zM751.2,518.2h2.3v1.1h-2.3zM691.8,508.2l1.8,1.8l-0.8,0.8l-1.8,-1.8zM860.9,494.2h1.3v1.3h-1.3zM942.8,523.2h1.3v1.3h-1.3zM686.5,497.5h2.3v1.1h-2.3zM847.0,479.7h2.3v1.1h-2.3zM911.4,532.1h2.3v1.1h-2.3zM942.9,520.4l1.8,1.8l-0.8,0.8l-1.8,-1.8zM729.1,500.2h2.3v1.1h-2.3zM1070.2,500.1l1.8,1.8l-0.8,0.8l-1.8,-1.8zM977.4,503.3h2.3v1.1h-2.3zM717.4,515.8l1.8,1.8l-0.8,0.8l-1.8,-1.8zM927.5,523.1h1.3v1.3h-1.3zM708.3,482.6h1.3v1.3h-1.3zM939.6,526.3h2.3v1.1h-2.3zM965.6,544.6h1.3v1.3h-1.3zM739.2,527.8h2.3v1.1h-2.3zM828.1,495.0h1.3v1.3h-1.3zM718.0,489.5h2.3v1.1h-2.3zM961.7,545.4l1.8,1.8l-0.8,0.8l-1.8,-1.8zM728.5,496.6h2.3v1.1h-2.3zM900.9,495.1h2.3v1.1h-2.3zM880.9,492.7l1.8,1.8l-0.8,0.8l-1.8,-1.8zM871.4,516.6h2.3v1.1h-2.3zM856.0,519.6h2.3v1.1h-2.3zM906.8,533.3h2.3v1.1h-2.3zM1081.3,451.3h2.3v1.1h-2.3zM946.8,504.3l1.8,1.8l-0.8,0.8l-1.8,-1.8zM891.1,488.2h2.3v1.1h-2.3zM761.2,538.3h2.3v1.1h-2.3zM1046.7,486.0h2.3v1.1h-2.3zM948.4,499.4h2.3v1.1h-2.3zM1000.1,514.6h1.3v1.3h-1.3zM738.6,487.3h2.3v1.1h-2.3zM676.2,516.9h1.3v1.3h-1.3zM927.6,482.9h2.3v1.1h-2.3zM855.8,494.7h2.3v1.1h-2.3zM934.2,531.9h2.3v1.1h-2.3zM1068.9,494.2h2.3v1.1h-2.3zM833.5,532.4h2.3v1.1h-2.3zM1059.3,500.7h2.3v1.1h-2.3zM770.6,506.9h1.3v1.3h-1.3zM944.2,523.8h1.3v1.3h-1.3zM695.5,490.4h2.3v1.1h-2.3zM1024.6,545.3h1.3v1.3h-1.3zM985.3,547.0l1.8,1.8l-0.8,0.8l-1.8,-1.8zM1020.3,544.1h1.3v1.3h-1.3zM1065.0,503.1h2.3v1.1h-2.3zM710.8,520.2h1.3v1.3h-1.3zM735.2,498.9h2.3v1.1h-2.3zM808.3,535.6h1.3v1.3h-1.3zM900.9,486.3h1.3v1.3h-1.3zM827.2,516.5h2.3v1.1h-2.3zM673.2,513.5l1.8,1.8l-0.8,0.8l-1.8,-1.8zM1050.8,471.2l1.8,1.8l-0.8,0.8l-1.8,-1.8zM869.6,495.3h1.3v1.3h-1.3zM1004.0,517.2l1.8,1.8l-0.8,0.8l-1.8,-1.8zM879.6,533.5h2.3v1.1h-2.3zM789.8,495.0h2.3v1.1h-2.3zM954.9,531.5h1.3v1.3h-1.3zM1070.1,479.3h1.3v1.3h-1.3zM955.3,499.9l1.8,1.8l-0.8,0.8l-1.8,-1.8zM850.6,504.3l1.8,1.8l-0.8,0.8l-1.8,-1.8zM865.1,495.0h1.3v1.3h-1.3zM1114.3,465.3h2.3v1.1h-2.3zM877.4,509.7h2.3v1.1h-2.3zM1056.9,481.8h2.3v1.1h-2.3zM873.7,500.3h2.3v1.1h-2.3zM968.9,513.8h1.3v1.3h-1.3zM1067.3,506.2h2.3v1.1h-2.3zM855.7,532.6h2.3v1.1h-2.3zM910.4,491.7h2.3v1.1h-2.3zM791.1,514.3h1.3v1.3h-1.3zM1163.7,466.8h2.3v1.1h-2.3zM759.8,485.6h2.3v1.1h-2.3zM1027.1,536.7h2.3v1.1h-2.3zM898.3,476.2l1.8,1.8l-0.8,0.8l-1.8,-1.8zM892.3,508.6h2.3v1.1h-2.3zM918.2,533.2h2.3v1.1h-2.3zM832.3,542.1h2.3v1.1h-2.3zM860.1,524.9l1.8,1.8l-0.8,0.8l-1.8,-1.8zM717.5,530.4l1.8,1.8l-0.8,0.8l-1.8,-1.8zM922.7,499.2l1.8,1.8l-0.8,0.8l-1.8,-1.8zM931.5,489.2h1.3v1.3h-1.3zM1059.9,519.3h2.3v1.1h-2.3zM1081.3,477.6l1.8,1.8l-0.8,0.8l-1.8,-1.8zM1081.9,478.2h2.3v1.1h-2.3zM899.1,504.1h2.3v1.1h-2.3zM958.6,541.7h2.3v1.1h-2.3zM1050.7,521.3h1.3v1.3h-1.3zM1052.0,459.2h1.3v1.3h-1.3zM942.2,476.2h1.3v1.3h-1.3zM763.2,523.5h2.3v1.1h-2.3zM1061.8,468.9l1.8,1.8l-0.8,0.8l-1.8,-1.8zM865.3,524.8h1.3v1.3h-1.3zM861.6,482.7h2.3v1.1h-2.3zM871.8,491.9h2.3v1.1h-2.3zM802.1,532.8h1.3v1.3h-1.3zM906.4,508.3h2.3v1.1h-2.3zM808.4,519.8h2.3v1.1h-2.3zM977.0,513.5h1.3v1.3h-1.3zM973.7,530.3h2.3v1.1h-2.3zM1117.4,470.0h2.3v1.1h-2.3zM867.1,508.2h2.3v1.1h-2.3zM692.3,501.2l1.8,1.8l-0.8,0.8l-1.8,-1.8zM754.2,481.5h2.3v1.1h-2.3zM1068.9,507.9h1.3v1.3h-1.3zM940.3,510.1h1.3v1.3h-1.3zM880.2,531.1h2.3v1.1h-2.3zM852.0,484.2h2.3v1.1h-2.3zM780.5,475.2l1.8,1.8l-0.8,0.8l-1.8,-1.8zM768.7,489.4h2.3v1.1h-2.3zM976.0,523.7h2.3v1.1h-2.3zM1012.3,512.6h2.3v1.1h-2.3zM1089.3,479.7h1.3v1.3h-1.3zM717.5,479.7h2.3v1.1h-2.3zM1117.7,469.0h1.3v1.3h-1.3zM696.6,514.1h1.3v1.3h-1.3zM1064.2,464.5h2.3v1.1h-2.3zM931.0,475.9h2.3v1.1h-2.3zM963.4,523.7h2.3v1.1h-2.3zM721.6,513.5h1.3v1.3h-1.3zM839.6,496.2h1.3v1.3h-1.3zM908.2,528.9l1.8,1.8l-0.8,0.8l-1.8,-1.8zM1103.7,463.3h1.3v1.3h-1.3zM957.6,501.7h2.3v1.1h-2.3zM753.4,533.2h1.3v1.3h-1.3zM999.7,540.0h2.3v1.1h-2.3zM761.6,496.7h1.3v1.3h-1.3zM749.1,480.5h2.3v1.1h-2.3zM1181.5,443.8h1.3v1.3h-1.3zM725.0,476.4h2.3v1.1h-2.3zM708.9,525.4h1.3v1.3h-1.3zM819.7,530.8h1.3v1.3h-1.3zM868.8,514.2l1.8,1.8l-0.8,0.8l-1.8,-1.8zM1034.4,522.4h2.3v1.1h-2.3zM1142.6,471.7h2.3v1.1h-2.3zM1022.0,513.7h1.3v1.3h-1.3zM1001.1,529.3h2.3v1.1h-2.3zM1166.6,466.4h1.3v1.3h-1.3zM936.4,543.0h2.3v1.1h-2.3zM1067.0,497.3h2.3v1.1h-2.3zM786.1,509.5h2.3v1.1h-2.3zM1066.0,485.8h1.3v1.3h-1.3zM731.2,510.4h2.3v1.1h-2.3zM1017.8,547.9l1.8,1.8l-0.8,0.8l-1.8,-1.8zM866.8,515.7h2.3v1.1h-2.3zM757.4,486.9h2.3v1.1h-2.3zM725.9,507.2h1.3v1.3h-1.3zM774.6,506.7h1.3v1.3h-1.3zM922.2,531.0h1.3v1.3h-1.3zM922.9,493.5h1.3v1.3h-1.3zM823.9,486.4h2.3v1.1h-2.3zM712.2,530.1l1.8,1.8l-0.8,0.8l-1.8,-1.8zM945.7,521.3h1.3v1.3h-1.3zM740.4,512.0h2.3v1.1h-2.3zM884.9,498.4h1.3v1.3h-1.3zM864.8,519.6l1.8,1.8l-0.8,0.8l-1.8,-1.8zM914.0,540.2h2.3v1.1h-2.3zM682.4,514.2h1.3v1.3h-1.3zM949.9,531.5h2.3v1.1h-2.3zM798.8,514.0l1.8,1.8l-0.8,0.8l-1.8,-1.8zM810.2,538.8h2.3v1.1h-2.3zM1084.2,477.0h1.3v1.3h-1.3zM980.8,527.4h2.3v1.1h-2.3zM1146.3,459.1h1.3v1.3h-1.3zM971.6,505.9h2.3v1.1h-2.3zM753.9,532.6h2.3v1.1h-2.3zM1074.0,466.2h2.3v1.1h-2.3zM947.0,532.1h2.3v1.1h-2.3zM871.6,481.1l1.8,1.8l-0.8,0.8l-1.8,-1.8zM1168.8,456.4l1.8,1.8l-0.8,0.8l-1.8,-1.8zM675.5,483.7h1.3v1.3h-1.3zM821.6,536.2l1.8,1.8l-0.8,0.8l-1.8,-1.8zM805.2,480.8h2.3v1.1h-2.3zM1045.3,467.1h2.3v1.1h-2.3zM896.9,520.7h1.3v1.3h-1.3zM874.8,498.9h2.3v1.1h-2.3zM766.1,535.5h2.3v1.1h-2.3z" fill="#222"/>
<polyline points="517.50,535.70 669.30,537.30 1039.40,549.90 1095.00,473.00 1173.00,472.50 1199.60,435.00" fill="none" stroke="#000" stroke-width="2.2" />
<clipPath id="cc1"><path d="M1000.8,445.2 Q990,446.5 980,454.3 L980,481.5 L1039.8,481.5 L1039.8,439 L1021.5,431.3 L1019.1,431.3 L1019.1,454.9 L1000.8,454.9 Z"/></clipPath>
<g clip-path="url(#cc1)" stroke="#000">
<line x1="892.0" y1="425" x2="952.0" y2="485" stroke-width="1.6"/>
<line x1="898.5" y1="425" x2="958.5" y2="485" stroke-width="1.4" stroke-dasharray="6 5"/>
<line x1="905.5" y1="425" x2="965.5" y2="485" stroke-width="1.6"/>
<line x1="912.0" y1="425" x2="972.0" y2="485" stroke-width="1.4" stroke-dasharray="6 5"/>
<line x1="919.0" y1="425" x2="979.0" y2="485" stroke-width="1.6"/>
<line x1="925.5" y1="425" x2="985.5" y2="485" stroke-width="1.4" stroke-dasharray="6 5"/>
<line x1="932.5" y1="425" x2="992.5" y2="485" stroke-width="1.6"/>
<line x1="939.0" y1="425" x2="999.0" y2="485" stroke-width="1.4" stroke-dasharray="6 5"/>
<line x1="946.0" y1="425" x2="1006.0" y2="485" stroke-width="1.6"/>
<line x1="952.5" y1="425" x2="1012.5" y2="485" stroke-width="1.4" stroke-dasharray="6 5"/>
<line x1="959.5" y1="425" x2="1019.5" y2="485" stroke-width="1.6"/>
<line x1="966.0" y1="425" x2="1026.0" y2="485" stroke-width="1.4" stroke-dasharray="6 5"/>
<line x1="973.0" y1="425" x2="1033.0" y2="485" stroke-width="1.6"/>
<line x1="979.5" y1="425" x2="1039.5" y2="485" stroke-width="1.4" stroke-dasharray="6 5"/>
<line x1="986.5" y1="425" x2="1046.5" y2="485" stroke-width="1.6"/>
<line x1="993.0" y1="425" x2="1053.0" y2="485" stroke-width="1.4" stroke-dasharray="6 5"/>
<line x1="1000.0" y1="425" x2="1060.0" y2="485" stroke-width="1.6"/>
<line x1="1006.5" y1="425" x2="1066.5" y2="485" stroke-width="1.4" stroke-dasharray="6 5"/>
<line x1="1013.5" y1="425" x2="1073.5" y2="485" stroke-width="1.6"/>
<line x1="1020.0" y1="425" x2="1080.0" y2="485" stroke-width="1.4" stroke-dasharray="6 5"/>
<line x1="1027.0" y1="425" x2="1087.0" y2="485" stroke-width="1.6"/>
<line x1="1033.5" y1="425" x2="1093.5" y2="485" stroke-width="1.4" stroke-dasharray="6 5"/>
<line x1="1040.5" y1="425" x2="1100.5" y2="485" stroke-width="1.6"/>
<line x1="1047.0" y1="425" x2="1107.0" y2="485" stroke-width="1.4" stroke-dasharray="6 5"/>
<line x1="1054.0" y1="425" x2="1114.0" y2="485" stroke-width="1.6"/>
<line x1="1060.5" y1="425" x2="1120.5" y2="485" stroke-width="1.4" stroke-dasharray="6 5"/>
<line x1="1067.5" y1="425" x2="1127.5" y2="485" stroke-width="1.6"/>
<line x1="1074.0" y1="425" x2="1134.0" y2="485" stroke-width="1.4" stroke-dasharray="6 5"/>
<line x1="1081.0" y1="425" x2="1141.0" y2="485" stroke-width="1.6"/>
<line x1="1087.5" y1="425" x2="1147.5" y2="485" stroke-width="1.4" stroke-dasharray="6 5"/>
<line x1="1094.5" y1="425" x2="1154.5" y2="485" stroke-width="1.6"/>
<line x1="1101.0" y1="425" x2="1161.0" y2="485" stroke-width="1.4" stroke-dasharray="6 5"/>
</g>
<path d="M1000.8,445.2 Q990,446.5 980,454.3 L980,481.5 L1039.8,481.5 L1039.8,439 L1021.5,431.3 L1019.1,431.3 L1019.1,454.9 L1000.8,454.9 Z" fill="none" stroke="#000" stroke-width="2"/>
<polygon points="1000.80,428.30 1003.80,416.50 1019.10,416.50 1019.10,454.90 1000.80,454.90" fill="#fff" stroke="#000" stroke-width="2" />
<polygon points="1019.10,415.70 1152.80,413.60 1152.80,423.90 1019.10,425.50" fill="#fff" stroke="#000" stroke-width="2" />
<line x1="1044.70" y1="416.30" x2="1044.70" y2="424.30" stroke="#333" stroke-width="1.4" />
<line x1="1078.50" y1="415.77" x2="1078.50" y2="423.77" stroke="#333" stroke-width="1.4" />
<line x1="1111.60" y1="415.25" x2="1111.60" y2="423.25" stroke="#333" stroke-width="1.4" />
<line x1="1145.80" y1="414.71" x2="1145.80" y2="422.71" stroke="#333" stroke-width="1.4" />
<line x1="1021.00" y1="429.60" x2="1140.00" y2="428.20" stroke="#000" stroke-width="1.8" />
<clipPath id="cc2"><path d="M1138.6,432.3 L1151,428.4 L1152.8,428.4 L1152.8,439 L1161.6,439 L1161.6,428.4 L1163,428.4 L1175.2,433.9 L1175.2,453.1 L1138.6,453.1 Z"/></clipPath>
<g clip-path="url(#cc2)" stroke="#000">
<line x1="1059.0" y1="425" x2="1099.0" y2="465" stroke-width="1.6"/>
<line x1="1065.5" y1="425" x2="1105.5" y2="465" stroke-width="1.4" stroke-dasharray="5 4"/>
<line x1="1072.5" y1="425" x2="1112.5" y2="465" stroke-width="1.6"/>
<line x1="1079.0" y1="425" x2="1119.0" y2="465" stroke-width="1.4" stroke-dasharray="5 4"/>
<line x1="1086.0" y1="425" x2="1126.0" y2="465" stroke-width="1.6"/>
<line x1="1092.5" y1="425" x2="1132.5" y2="465" stroke-width="1.4" stroke-dasharray="5 4"/>
<line x1="1099.5" y1="425" x2="1139.5" y2="465" stroke-width="1.6"/>
<line x1="1106.0" y1="425" x2="1146.0" y2="465" stroke-width="1.4" stroke-dasharray="5 4"/>
<line x1="1113.0" y1="425" x2="1153.0" y2="465" stroke-width="1.6"/>
<line x1="1119.5" y1="425" x2="1159.5" y2="465" stroke-width="1.4" stroke-dasharray="5 4"/>
<line x1="1126.5" y1="425" x2="1166.5" y2="465" stroke-width="1.6"/>
<line x1="1133.0" y1="425" x2="1173.0" y2="465" stroke-width="1.4" stroke-dasharray="5 4"/>
<line x1="1140.0" y1="425" x2="1180.0" y2="465" stroke-width="1.6"/>
<line x1="1146.5" y1="425" x2="1186.5" y2="465" stroke-width="1.4" stroke-dasharray="5 4"/>
<line x1="1153.5" y1="425" x2="1193.5" y2="465" stroke-width="1.6"/>
<line x1="1160.0" y1="425" x2="1200.0" y2="465" stroke-width="1.4" stroke-dasharray="5 4"/>
<line x1="1167.0" y1="425" x2="1207.0" y2="465" stroke-width="1.6"/>
<line x1="1173.5" y1="425" x2="1213.5" y2="465" stroke-width="1.4" stroke-dasharray="5 4"/>
<line x1="1180.5" y1="425" x2="1220.5" y2="465" stroke-width="1.6"/>
<line x1="1187.0" y1="425" x2="1227.0" y2="465" stroke-width="1.4" stroke-dasharray="5 4"/>
<line x1="1194.0" y1="425" x2="1234.0" y2="465" stroke-width="1.6"/>
<line x1="1200.5" y1="425" x2="1240.5" y2="465" stroke-width="1.4" stroke-dasharray="5 4"/>
<line x1="1207.5" y1="425" x2="1247.5" y2="465" stroke-width="1.6"/>
<line x1="1214.0" y1="425" x2="1254.0" y2="465" stroke-width="1.4" stroke-dasharray="5 4"/>
</g>
<path d="M1138.6,432.3 L1151,428.4 L1152.8,428.4 L1152.8,439 L1161.6,439 L1161.6,428.4 L1163,428.4 L1175.2,433.9 L1175.2,453.1 L1138.6,453.1 Z" fill="none" stroke="#000" stroke-width="2"/>
<rect x="1152.8" y="413.9" width="8.8" height="25.1" fill="#fff" stroke="#000" stroke-width="2"/>
<line x1="1161.60" y1="414.40" x2="1314.70" y2="414.40" stroke="#000" stroke-width="2.2" />
<line x1="1175.30" y1="434.60" x2="1314.70" y2="434.60" stroke="#000" stroke-width="2.2" />
<path d="M1177.9,417.4 Q1180.7,421.2 1183.5,417.4 M1180.7,416.2 V420.8" fill="none" stroke="#000" stroke-width="1.2"/>
<path d="M1201.6,417.4 Q1204.4,421.2 1207.2,417.4 M1204.4,416.2 V420.8" fill="none" stroke="#000" stroke-width="1.2"/>
<path d="M1225.3,417.4 Q1228.1,421.2 1230.9,417.4 M1228.1,416.2 V420.8" fill="none" stroke="#000" stroke-width="1.2"/>
<path d="M1249.0,417.4 Q1251.8,421.2 1254.6,417.4 M1251.8,416.2 V420.8" fill="none" stroke="#000" stroke-width="1.2"/>
<path d="M1272.7,417.4 Q1275.5,421.2 1278.3,417.4 M1275.5,416.2 V420.8" fill="none" stroke="#000" stroke-width="1.2"/>
<path d="M1296.4,417.4 Q1299.2,421.2 1302.0,417.4 M1299.2,416.2 V420.8" fill="none" stroke="#000" stroke-width="1.2"/>
<path d="M1189.7,429.3 Q1192.5,433.1 1195.3,429.3 M1192.5,428.1 V432.7" fill="none" stroke="#000" stroke-width="1.2"/>
<path d="M1213.4,429.3 Q1216.2,433.1 1219.0,429.3 M1216.2,428.1 V432.7" fill="none" stroke="#000" stroke-width="1.2"/>
<path d="M1237.1,429.3 Q1239.9,433.1 1242.7,429.3 M1239.9,428.1 V432.7" fill="none" stroke="#000" stroke-width="1.2"/>
<path d="M1260.8,429.3 Q1263.6,433.1 1266.4,429.3 M1263.6,428.1 V432.7" fill="none" stroke="#000" stroke-width="1.2"/>
<path d="M1284.5,429.3 Q1287.3,433.1 1290.1,429.3 M1287.3,428.1 V432.7" fill="none" stroke="#000" stroke-width="1.2"/>
<path d="M517.4,545.9L521.1,549.5M519.9,536.8L532.6,549.5M531.7,536.9L539.9,545.8M539.9,542.7L545.7,537.3M540.4,549.5L544.6,545.7M544.1,542.5L551.6,549.9M550.4,537.1L563.1,549.8M562.2,537.3L570.4,546.2M570.4,543.1L576.2,537.6M570.9,549.9L575.1,546.0M574.6,542.8L582.1,550.2M580.9,537.5L593.6,550.1M592.7,537.6L600.9,546.5M600.9,543.4L606.7,537.9M601.4,550.2L605.6,546.3M605.1,543.1L612.5,550.5M611.4,537.8L624.1,550.4M623.2,537.9L631.4,546.8M631.4,543.7L637.2,538.3M631.9,550.5L636.1,546.7M635.6,543.4L643.0,550.8M641.9,538.1L654.5,550.7M653.7,538.2L661.9,547.1M661.9,544.0L667.7,538.6M662.3,550.8L666.6,547.0M666.1,543.8L669.2,546.8" stroke="#000" stroke-width="1.3" fill="none"/>
<path d="M669.2,540.0L670.8,538.7M669.0,547.5L669.5,547.0M669.1,543.8L676.3,551.3M675.5,538.6L687.8,551.5M687.3,539.0L695.2,548.1M695.4,545.0L701.2,539.7M695.6,551.8L700.0,548.0M699.6,544.8L706.8,552.4M705.9,539.6L718.3,552.6M717.7,540.0L725.7,549.1M725.8,546.0L731.7,540.7M726.1,552.8L730.4,549.1M730.0,545.9L737.3,553.4M736.4,540.7L748.8,553.6M748.2,541.1L756.2,550.2M756.3,547.1L762.2,541.8M756.6,553.9L760.9,550.1M760.5,546.9L767.8,554.5M766.9,541.7L779.3,554.7M778.7,542.1L786.7,551.2M786.8,548.1L792.7,542.8M787.1,554.9L791.4,551.2M791.0,547.9L798.3,555.5M797.4,542.8L809.8,555.7M809.2,543.2L817.2,552.2M817.3,549.1L823.2,543.8M817.6,556.0L821.9,552.2M821.5,549.0L828.7,556.5M827.9,543.8L840.2,556.7M839.7,544.2L847.7,553.3M847.8,550.2L853.6,544.9M848.0,557.0L852.4,553.2M852.0,550.0L859.2,557.6M858.4,544.8L870.7,557.8M870.1,545.2L878.1,554.3M878.2,551.2L884.1,545.9M878.5,558.0L882.8,554.3M882.5,551.1L889.7,558.6M888.8,545.9L901.2,558.8M900.6,546.3L908.6,555.4M908.7,552.3L914.6,547.0M909.0,559.1L913.3,555.3M912.9,552.1L920.2,559.6M919.3,546.9L931.7,559.8M931.1,547.3L939.1,556.4M939.2,553.3L945.1,548.0M939.5,560.1L943.8,556.4M943.4,553.1L950.7,560.7M949.8,548.0L962.2,560.9M961.6,548.4L969.6,557.4M969.7,554.3L975.6,549.0M970.0,561.1L974.3,557.4M973.9,554.2L981.1,561.7M980.3,549.0L992.6,561.9M992.1,549.4L1000.1,558.5M1000.2,555.4L1006.1,550.1M1000.4,562.2L1004.8,558.4M1004.4,555.2L1011.6,562.8M1010.8,550.0L1023.1,563.0M1022.6,550.4L1030.6,559.5M1030.7,556.4L1036.5,551.1M1030.9,563.2L1035.3,559.5M1034.9,556.2L1039.0,560.6" stroke="#000" stroke-width="1.3" fill="none"/>
<path d="M1095.0,476.7L1097.5,474.3M1095.1,484.1L1096.6,482.7M1096.0,479.5L1103.6,486.7M1102.2,474.1L1115.1,486.5M1114.0,474.0L1122.4,482.7M1122.3,479.6L1128.0,474.1M1122.9,486.4L1127.1,482.5M1126.5,479.3L1134.1,486.5M1132.7,473.9L1145.6,486.3M1144.5,473.8L1152.9,482.5M1152.8,479.4L1158.5,473.9M1153.4,486.2L1157.6,482.3M1157.0,479.1L1164.6,486.4M1163.2,473.7L1173.1,483.2" stroke="#000" stroke-width="1.3" fill="none"/>
<path d="M1228.9,435.7L1216.1,448.2M1217.1,435.7L1208.8,444.5M1208.8,441.4L1203.1,435.9M1208.3,448.2L1204.1,444.3M1204.6,441.1L1199.6,446.0M1259.4,435.7L1246.6,448.2M1247.6,435.7L1239.3,444.5M1239.3,441.4L1233.6,435.9M1238.8,448.2L1234.6,444.3M1235.1,441.1L1227.6,448.4M1289.9,435.7L1277.1,448.2M1278.1,435.7L1269.8,444.5M1269.8,441.4L1264.1,435.9M1269.3,448.2L1265.1,444.3M1265.6,441.1L1258.1,448.4M1314.7,441.3L1307.6,448.2M1308.6,435.7L1300.3,444.5M1300.3,441.4L1294.6,435.9M1299.8,448.2L1295.6,444.3M1296.1,441.1L1288.6,448.4" stroke="#000" stroke-width="1.3" fill="none"/>
<path d="M1046.5,542.1L1055.7,548.7M1051.2,535.6L1060.4,542.2M1055.9,529.1L1065.1,535.7M1063.9,530.6L1076.1,515.4M1059.4,524.3L1063.3,527.1M1064.1,517.8L1068.0,520.6M1068.5,511.7L1073.2,515.1M1074.4,511.7L1087.8,496.6M1077.0,512.3L1080.7,515.0M1083.2,506.3L1085.7,508.1M1084.0,490.2L1093.2,496.9M1088.7,483.7L1097.9,490.4M1093.4,477.3L1102.6,483.9M1101.4,478.7L1102.7,478.6" stroke="#000" stroke-width="1.3" fill="none"/>
<path d="M1177.5,468.3L1186.7,474.8M1182.1,461.8L1191.3,468.3M1186.7,455.3L1195.9,461.8M1194.7,456.6L1206.8,441.3M1190.2,450.4L1194.1,453.1M1194.8,443.8L1198.7,446.6M1199.1,437.7L1203.9,441.1" stroke="#000" stroke-width="1.3" fill="none"/>
<polyline points="772.00,316.50 759.80,316.50 759.80,449.00" fill="none" stroke="#111" stroke-width="1.3" />
<polygon points="759.80,449.50 756.80,436.50 762.80,436.50" fill="#000" stroke="none" stroke-width="0" />
<polyline points="780.00,359.00 767.60,359.00 767.60,475.50" fill="none" stroke="#111" stroke-width="1.3" />
<polygon points="767.60,476.00 764.60,463.00 770.60,463.00" fill="#000" stroke="none" stroke-width="0" />
<polyline points="789.00,401.20 776.70,401.20 776.70,541.00" fill="none" stroke="#111" stroke-width="1.3" />
<polygon points="776.70,541.50 773.70,528.50 779.70,528.50" fill="#000" stroke="none" stroke-width="0" />
<polyline points="1127.00,300.40 1140.60,300.40 1140.60,423.50" fill="none" stroke="#111" stroke-width="1.3" />
<polygon points="1140.60,424.00 1137.60,411.00 1143.60,411.00" fill="#000" stroke="none" stroke-width="0" />
<polyline points="1119.00,323.60 1133.20,323.60 1133.20,471.00" fill="none" stroke="#111" stroke-width="1.3" />
<polygon points="1133.20,471.50 1130.20,458.50 1136.20,458.50" fill="#000" stroke="none" stroke-width="0" />
<polyline points="973.00,380.60 987.20,380.60 999.90,427.20" fill="none" stroke="#111" stroke-width="1.3" />
<polygon points="999.90,427.50 993.15,414.82 999.33,413.15" fill="#000" stroke="none" stroke-width="0" />
<polyline points="1105.70,374.40 1033.70,374.40 1019.80,415.30" fill="none" stroke="#111" stroke-width="1.3" />
<polygon points="1019.80,415.80 1021.22,401.51 1027.29,403.55" fill="#000" stroke="none" stroke-width="0" />
<line x1="553.20" y1="424.40" x2="619.60" y2="425.80" stroke="#000" stroke-width="2" />
<polygon points="620.00,425.90 604.95,428.16 605.06,422.96" fill="#000" stroke="none" stroke-width="0" />
<line x1="879.10" y1="424.40" x2="945.60" y2="422.90" stroke="#000" stroke-width="2" />
<polygon points="879.00,424.40 893.94,421.46 894.05,426.66" fill="#000" stroke="none" stroke-width="0" />
<line x1="1055.70" y1="407.20" x2="1123.10" y2="404.80" stroke="#000" stroke-width="2" />
<polygon points="1055.50,407.20 1070.40,404.07 1070.58,409.27" fill="#000" stroke="none" stroke-width="0" />
<line x1="807.20" y1="538.40" x2="873.70" y2="540.50" stroke="#000" stroke-width="2" />
<polygon points="874.00,540.50 858.93,542.63 859.09,537.43" fill="#000" stroke="none" stroke-width="0" />
<line x1="1072.00" y1="472.60" x2="1138.60" y2="472.30" stroke="#000" stroke-width="2" />
<polygon points="1071.50,472.60 1086.49,469.93 1086.51,475.13" fill="#000" stroke="none" stroke-width="0" />
</g>
</svg></body></html>
